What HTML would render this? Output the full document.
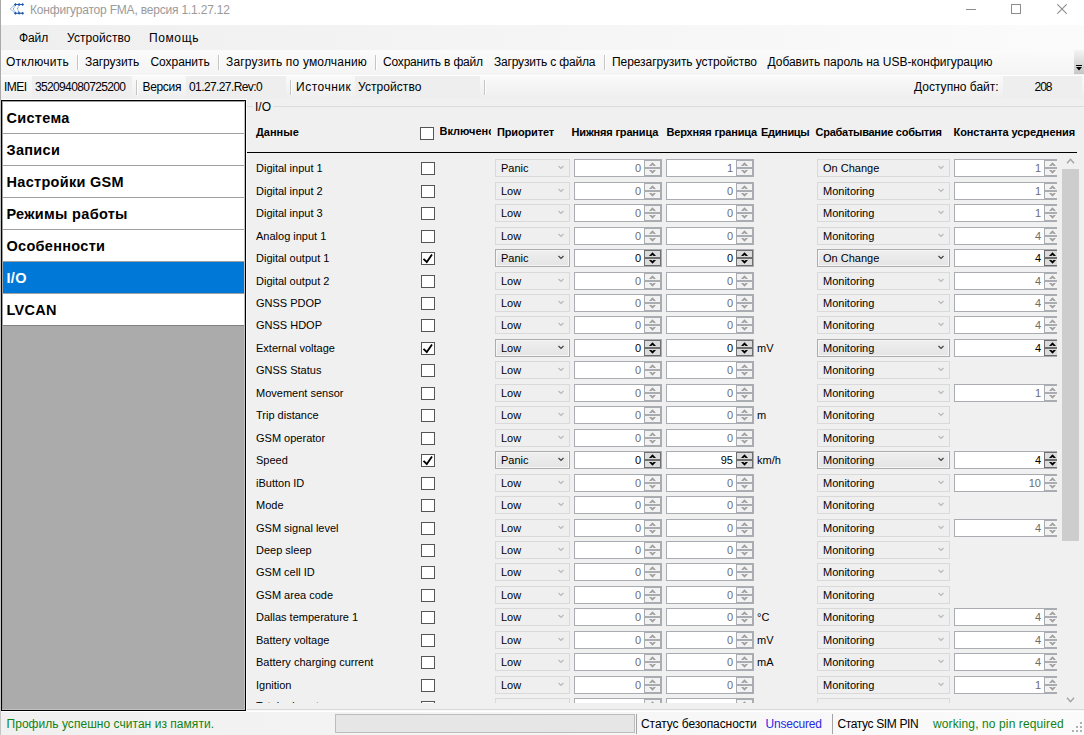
<!DOCTYPE html>
<html><head><meta charset="utf-8"><style>
html,body{margin:0;padding:0;width:1084px;height:735px;overflow:hidden;background:#f0f0f0}
.r{position:absolute}
.t{position:absolute;white-space:nowrap;font-family:'Liberation Sans',sans-serif;}
</style></head><body>
<div class="r" style="left:0px;top:0px;width:1084px;height:735px;background:#f0f0f0"></div><div class="r" style="left:0px;top:0px;width:1084px;height:25px;background:#fff"></div><div class="r" style="left:0px;top:0px;width:1px;height:100px;background:#a9a9a9"></div><div class="r" style="left:0px;top:100px;width:1px;height:635px;background:#c4c4c4"></div><svg class="r" style="left:8px;top:1px" width="20" height="16" viewBox="0 0 20 16">
<g fill="none" stroke="#5d8fcf" stroke-width="1" stroke-dasharray="1.1 0.5"><path d="M7 3.5 L2.3 7.9 L7 12.2"/><path d="M7.6 4.2 L5.2 7.9 L7.6 11.6"/><path d="M11.1 4.2 L9.4 7.9 L11.1 11.6"/></g>
<g fill="#1d5aa6"><path d="M7.4 3 h7.4 v1 h-7.4z M7.4 11.7 h7.4 v1 h-7.4z"/>
<path d="M7.4 2 L8.9 3.5 L7.4 5 L5.9 3.5z M11.1 2 L12.6 3.5 L11.1 5 L9.6 3.5z M14.6 2 L16.1 3.5 L14.6 5 L13.1 3.5z"/>
<path d="M7.4 10.7 L8.9 12.2 L7.4 13.7 L5.9 12.2z M11.1 10.7 L12.6 12.2 L11.1 13.7 L9.6 12.2z M14.6 10.7 L16.1 12.2 L14.6 13.7 L13.1 12.2z"/></g></svg><div class="t" style="left:30px;top:3px;font-size:12px;line-height:15px;color:#9a9a9a;font-weight:normal;letter-spacing:-0.197px;">Конфигуратор FMA, версия 1.1.27.12</div><div class="r" style="left:966px;top:9px;width:10px;height:1px;background:#8c8c8c"></div><div class="r" style="left:1011px;top:4px;width:10px;height:10px;border:1px solid #8c8c8c;box-sizing:border-box"></div><svg class="r" style="left:1057px;top:4px" width="10" height="10" viewBox="0 0 10 10"><path d="M0.3 0.3 L9.7 9.7 M9.7 0.3 L0.3 9.7" stroke="#8c8c8c" stroke-width="1.1"/></svg><div class="r" style="left:1px;top:25px;width:1083px;height:25px;background:linear-gradient(to right,#efefef,#fbfbfb)"></div><div class="t" style="left:19px;top:31px;font-size:12px;line-height:15px;color:#000;font-weight:normal;letter-spacing:-0.105px;">Файл</div><div class="t" style="left:67px;top:31px;font-size:12px;line-height:15px;color:#000;font-weight:normal;letter-spacing:0.080px;">Устройство</div><div class="t" style="left:149px;top:31px;font-size:12px;line-height:15px;color:#000;font-weight:normal;letter-spacing:0.608px;">Помощь</div><div class="r" style="left:1px;top:50px;width:1073px;height:25px;background:linear-gradient(#fbfbfb,#f4f4f4)"></div><div class="t" style="left:6px;top:55px;font-size:12px;line-height:15px;color:#000;font-weight:normal;letter-spacing:0.255px;">Отключить</div><div class="t" style="left:85px;top:55px;font-size:12px;line-height:15px;color:#000;font-weight:normal;letter-spacing:-0.075px;">Загрузить</div><div class="t" style="left:150.5px;top:55px;font-size:12px;line-height:15px;color:#000;font-weight:normal;letter-spacing:-0.055px;">Сохранить</div><div class="t" style="left:226px;top:55px;font-size:12px;line-height:15px;color:#000;font-weight:normal;letter-spacing:0.174px;">Загрузить по умолчанию</div><div class="t" style="left:383px;top:55px;font-size:12px;line-height:15px;color:#000;font-weight:normal;letter-spacing:-0.189px;">Сохранить в файл</div><div class="t" style="left:494px;top:55px;font-size:12px;line-height:15px;color:#000;font-weight:normal;letter-spacing:-0.187px;">Загрузить с файла</div><div class="t" style="left:612px;top:55px;font-size:12px;line-height:15px;color:#000;font-weight:normal;letter-spacing:-0.069px;">Перезагрузить устройство</div><div class="t" style="left:767.5px;top:55px;font-size:12px;line-height:15px;color:#000;font-weight:normal;letter-spacing:-0.028px;">Добавить пароль на USB-конфигурацию</div><div class="r" style="left:77px;top:55px;width:1px;height:15px;background:#c5c5c5"></div><div class="r" style="left:78px;top:55px;width:1px;height:15px;background:#fff"></div><div class="r" style="left:218px;top:55px;width:1px;height:15px;background:#c5c5c5"></div><div class="r" style="left:219px;top:55px;width:1px;height:15px;background:#fff"></div><div class="r" style="left:375px;top:55px;width:1px;height:15px;background:#c5c5c5"></div><div class="r" style="left:376px;top:55px;width:1px;height:15px;background:#fff"></div><div class="r" style="left:604px;top:55px;width:1px;height:15px;background:#c5c5c5"></div><div class="r" style="left:605px;top:55px;width:1px;height:15px;background:#fff"></div><div class="r" style="left:1074px;top:50px;width:10px;height:24px;background:linear-gradient(#f4f4f4,#c6c6c6)"></div><svg class="r" style="left:1075px;top:64px" width="8" height="8" viewBox="0 0 8 8"><path d="M1 1.5h6" stroke="#000"/><path d="M1 3h6L4 6.5z" fill="#000"/></svg><div class="r" style="left:1px;top:75px;width:1083px;height:1px;background:#fff"></div><div class="r" style="left:1px;top:76px;width:1083px;height:23px;background:linear-gradient(#fafafa,#eeeeee)"></div><div class="r" style="left:1px;top:99px;width:246px;height:1px;background:#fff"></div><div class="t" style="left:4px;top:80px;font-size:12px;line-height:15px;color:#000;font-weight:normal;letter-spacing:-0.524px;">IMEI</div><div class="r" style="left:32px;top:76px;width:100px;height:22px;background:#eeeeee"></div><div class="t" style="left:35px;top:80px;font-size:12px;line-height:15px;color:#000;font-weight:normal;letter-spacing:-0.651px;">352094080725200</div><div class="r" style="left:136px;top:80px;width:1px;height:15px;background:#c5c5c5"></div><div class="r" style="left:137px;top:80px;width:1px;height:15px;background:#fff"></div><div class="t" style="left:142.5px;top:80px;font-size:12px;line-height:15px;color:#000;font-weight:normal;letter-spacing:-0.333px;">Версия</div><div class="r" style="left:186px;top:76px;width:100px;height:22px;background:#eeeeee"></div><div class="t" style="left:189px;top:80px;font-size:12px;line-height:15px;color:#000;font-weight:normal;letter-spacing:-0.600px;">01.27.27.Rev:0</div><div class="r" style="left:290px;top:80px;width:1px;height:15px;background:#c5c5c5"></div><div class="r" style="left:291px;top:80px;width:1px;height:15px;background:#fff"></div><div class="t" style="left:296px;top:80px;font-size:12px;line-height:15px;color:#000;font-weight:normal;letter-spacing:0.509px;">Источник</div><div class="r" style="left:355px;top:76px;width:125px;height:22px;background:#eeeeee"></div><div class="t" style="left:358px;top:80px;font-size:12px;line-height:15px;color:#000;font-weight:normal;letter-spacing:0.069px;">Устройство</div><div class="r" style="left:484px;top:80px;width:1px;height:15px;background:#c5c5c5"></div><div class="r" style="left:485px;top:80px;width:1px;height:15px;background:#fff"></div><div class="t" style="left:914px;top:80px;font-size:12px;line-height:15px;color:#000;font-weight:normal;letter-spacing:0.014px;">Доступно байт:</div><div class="r" style="left:1003px;top:76px;width:79px;height:22px;background:#eeeeee"></div><div class="t" style="left:1034.5px;top:80px;font-size:12px;line-height:15px;color:#000;font-weight:normal;letter-spacing:-1.016px;">208</div><div class="r" style="left:1px;top:100px;width:245px;height:611px;background:#ababab;border:1px solid #000;box-sizing:border-box"></div><div class="r" style="left:2px;top:101px;width:243px;height:1px;background:#a0a0a0"></div><div class="r" style="left:2px;top:101px;width:1px;height:609px;background:#a0a0a0"></div><div class="r" style="left:244px;top:101px;width:1px;height:609px;background:#c0c0c0"></div><div class="r" style="left:2px;top:709px;width:243px;height:1px;background:#c0c0c0"></div><div class="r" style="left:246px;top:99px;width:1px;height:613px;background:#f9f9f9"></div><div class="r" style="left:1px;top:711px;width:246px;height:1px;background:#fff"></div><div class="r" style="left:3px;top:102px;width:241px;height:31px;background:#fff"></div><div class="r" style="left:3px;top:133px;width:241px;height:1px;background:#a0a0a0"></div><div class="t" style="left:6.5px;top:109px;font-size:14.5px;line-height:18px;color:#000;font-weight:bold;letter-spacing:0.3px">Система</div><div class="r" style="left:3px;top:134px;width:241px;height:31px;background:#fff"></div><div class="r" style="left:3px;top:165px;width:241px;height:1px;background:#a0a0a0"></div><div class="t" style="left:6.5px;top:141px;font-size:14.5px;line-height:18px;color:#000;font-weight:bold;letter-spacing:0.3px">Записи</div><div class="r" style="left:3px;top:166px;width:241px;height:31px;background:#fff"></div><div class="r" style="left:3px;top:197px;width:241px;height:1px;background:#a0a0a0"></div><div class="t" style="left:6.5px;top:173px;font-size:14.5px;line-height:18px;color:#000;font-weight:bold;letter-spacing:0.3px">Настройки GSM</div><div class="r" style="left:3px;top:198px;width:241px;height:31px;background:#fff"></div><div class="r" style="left:3px;top:229px;width:241px;height:1px;background:#a0a0a0"></div><div class="t" style="left:6.5px;top:205px;font-size:14.5px;line-height:18px;color:#000;font-weight:bold;letter-spacing:0.3px">Режимы работы</div><div class="r" style="left:3px;top:230px;width:241px;height:31px;background:#fff"></div><div class="r" style="left:3px;top:261px;width:241px;height:1px;background:#a0a0a0"></div><div class="t" style="left:6.5px;top:237px;font-size:14.5px;line-height:18px;color:#000;font-weight:bold;letter-spacing:0.3px">Особенности</div><div class="r" style="left:3px;top:262px;width:241px;height:31px;background:#0078d7"></div><div class="r" style="left:3px;top:293px;width:241px;height:1px;background:#a0a0a0"></div><div class="t" style="left:6.5px;top:269px;font-size:14.5px;line-height:18px;color:#fff;font-weight:bold;letter-spacing:0.3px">I/O</div><div class="r" style="left:3px;top:294px;width:241px;height:31px;background:#fff"></div><div class="t" style="left:6.5px;top:301px;font-size:14.5px;line-height:18px;color:#000;font-weight:bold;letter-spacing:0.3px">LVCAN</div><div class="r" style="left:3px;top:325px;width:241px;height:1px;background:#808080"></div><div class="r" style="left:247px;top:106px;width:6px;height:1px;background:#dcdcdc"></div><div class="r" style="left:273px;top:106px;width:811px;height:1px;background:#dcdcdc"></div><div class="t" style="left:255px;top:100px;font-size:12px;line-height:15px;color:#000;font-weight:normal;">I/O</div><div class="t" style="left:256px;top:125px;font-size:11px;line-height:14px;color:#000;font-weight:bold;">Данные</div><div class="t" style="left:497px;top:125px;font-size:11px;line-height:14px;color:#000;font-weight:bold;letter-spacing:-0.143px;">Приоритет</div><div class="t" style="left:571.5px;top:125px;font-size:11px;line-height:14px;color:#000;font-weight:bold;letter-spacing:-0.161px;">Нижняя граница</div><div class="t" style="left:666.5px;top:125px;font-size:11px;line-height:14px;color:#000;font-weight:bold;letter-spacing:-0.174px;">Верхняя граница</div><div class="t" style="left:761px;top:125px;font-size:11px;line-height:14px;color:#000;font-weight:bold;letter-spacing:-0.326px;">Единицы</div><div class="t" style="left:815.5px;top:125px;font-size:11px;line-height:14px;color:#000;font-weight:bold;letter-spacing:-0.263px;">Срабатывание события</div><div class="t" style="left:953.5px;top:125px;font-size:11px;line-height:14px;color:#000;font-weight:bold;letter-spacing:-0.088px;">Константа усреднения</div><div class="t" style="left:439.5px;top:124px;font-size:11px;line-height:14px;color:#000;font-weight:bold;width:51.5px;overflow:hidden;">Включено</div><div class="r" style="left:420px;top:127px;width:14px;height:13px;background:#fff;border:1px solid #555;box-sizing:border-box"></div><div class="r" style="left:247px;top:152px;width:830px;height:1px;background:#000"></div><div class="r" style="left:247px;top:154px;width:837px;height:549px;overflow:hidden"><div class="t" style="left:9px;top:7px;font-size:11px;line-height:14px;color:#000;font-weight:normal;">Digital input 1</div><div class="r" style="left:174px;top:8px;width:14px;height:13px;background:#fff;border:1px solid #555;box-sizing:border-box"></div><div class="r" style="left:248px;top:5px;width:75px;height:18px;background:#efefef;border:1px solid #d9d9d9;box-sizing:border-box"></div><div class="t" style="left:254px;top:7px;font-size:11px;line-height:14px;color:#000;font-weight:normal;">Panic</div><svg class="r" style="left:311px;top:11px" width="6" height="5" viewBox="0 0 6 5"><path d="M0.5 1 L3 3.5 L5.5 1" fill="none" stroke="#b8b8b8" stroke-width="1.2"/></svg><div class="r" style="left:327px;top:5px;width:88px;height:18px;overflow:hidden"><div class="r" style="left:0;top:0;width:88px;height:18px;background:#fff;border:1px solid #a9adb1;box-sizing:border-box"></div><div class="r" style="left:70px;top:1px;width:17px;height:16px;background:#a9adb1"></div><div class="r" style="left:71px;top:2px;width:15px;height:6px;background:#f2f2f2"></div><div class="r" style="left:71px;top:10px;width:15px;height:6px;background:#f2f2f2"></div><svg class="r" style="left:75px;top:3px" width="7" height="12" viewBox="0 0 7 12"><path d="M0 4 L3.5 0.2 L7 4 L4.6 4 L3.5 3 L2.4 4 Z M0 8 L3.5 11.8 L7 8 L4.6 8 L3.5 9 L2.4 8 Z" fill="#a0a0a0"/></svg></div><div class="t" style="left:327px;top:6px;width:67px;text-align:right;font-size:11px;line-height:16px;color:#6d6d6d">0</div><div class="r" style="left:419px;top:5px;width:88px;height:18px;overflow:hidden"><div class="r" style="left:0;top:0;width:88px;height:18px;background:#fff;border:1px solid #a9adb1;box-sizing:border-box"></div><div class="r" style="left:70px;top:1px;width:17px;height:16px;background:#a9adb1"></div><div class="r" style="left:71px;top:2px;width:15px;height:6px;background:#f2f2f2"></div><div class="r" style="left:71px;top:10px;width:15px;height:6px;background:#f2f2f2"></div><svg class="r" style="left:75px;top:3px" width="7" height="12" viewBox="0 0 7 12"><path d="M0 4 L3.5 0.2 L7 4 L4.6 4 L3.5 3 L2.4 4 Z M0 8 L3.5 11.8 L7 8 L4.6 8 L3.5 9 L2.4 8 Z" fill="#a0a0a0"/></svg></div><div class="t" style="left:419px;top:6px;width:67px;text-align:right;font-size:11px;line-height:16px;color:#6d6d6d">1</div><div class="r" style="left:570px;top:5px;width:133px;height:18px;background:#efefef;border:1px solid #d9d9d9;box-sizing:border-box"></div><div class="t" style="left:576px;top:7px;font-size:11px;line-height:14px;color:#000;font-weight:normal;">On Change</div><svg class="r" style="left:691px;top:11px" width="6" height="5" viewBox="0 0 6 5"><path d="M0.5 1 L3 3.5 L5.5 1" fill="none" stroke="#b8b8b8" stroke-width="1.2"/></svg><div class="r" style="left:707px;top:5px;width:103px;height:18px;overflow:hidden"><div class="r" style="left:0;top:0;width:108px;height:18px;background:#fff;border:1px solid #a9adb1;box-sizing:border-box"></div><div class="r" style="left:90px;top:1px;width:17px;height:16px;background:#a9adb1"></div><div class="r" style="left:91px;top:2px;width:15px;height:6px;background:#f2f2f2"></div><div class="r" style="left:91px;top:10px;width:15px;height:6px;background:#f2f2f2"></div><svg class="r" style="left:95px;top:3px" width="7" height="12" viewBox="0 0 7 12"><path d="M0 4 L3.5 0.2 L7 4 L4.6 4 L3.5 3 L2.4 4 Z M0 8 L3.5 11.8 L7 8 L4.6 8 L3.5 9 L2.4 8 Z" fill="#a0a0a0"/></svg></div><div class="t" style="left:707px;top:6px;width:87px;text-align:right;font-size:11px;line-height:16px;color:#6d6d6d">1</div><div class="t" style="left:9px;top:30px;font-size:11px;line-height:14px;color:#000;font-weight:normal;">Digital input 2</div><div class="r" style="left:174px;top:31px;width:14px;height:13px;background:#fff;border:1px solid #555;box-sizing:border-box"></div><div class="r" style="left:248px;top:28px;width:75px;height:18px;background:#efefef;border:1px solid #d9d9d9;box-sizing:border-box"></div><div class="t" style="left:254px;top:30px;font-size:11px;line-height:14px;color:#000;font-weight:normal;">Low</div><svg class="r" style="left:311px;top:34px" width="6" height="5" viewBox="0 0 6 5"><path d="M0.5 1 L3 3.5 L5.5 1" fill="none" stroke="#b8b8b8" stroke-width="1.2"/></svg><div class="r" style="left:327px;top:28px;width:88px;height:18px;overflow:hidden"><div class="r" style="left:0;top:0;width:88px;height:18px;background:#fff;border:1px solid #a9adb1;box-sizing:border-box"></div><div class="r" style="left:70px;top:1px;width:17px;height:16px;background:#a9adb1"></div><div class="r" style="left:71px;top:2px;width:15px;height:6px;background:#f2f2f2"></div><div class="r" style="left:71px;top:10px;width:15px;height:6px;background:#f2f2f2"></div><svg class="r" style="left:75px;top:3px" width="7" height="12" viewBox="0 0 7 12"><path d="M0 4 L3.5 0.2 L7 4 L4.6 4 L3.5 3 L2.4 4 Z M0 8 L3.5 11.8 L7 8 L4.6 8 L3.5 9 L2.4 8 Z" fill="#a0a0a0"/></svg></div><div class="t" style="left:327px;top:29px;width:67px;text-align:right;font-size:11px;line-height:16px;color:#6d6d6d">0</div><div class="r" style="left:419px;top:28px;width:88px;height:18px;overflow:hidden"><div class="r" style="left:0;top:0;width:88px;height:18px;background:#fff;border:1px solid #a9adb1;box-sizing:border-box"></div><div class="r" style="left:70px;top:1px;width:17px;height:16px;background:#a9adb1"></div><div class="r" style="left:71px;top:2px;width:15px;height:6px;background:#f2f2f2"></div><div class="r" style="left:71px;top:10px;width:15px;height:6px;background:#f2f2f2"></div><svg class="r" style="left:75px;top:3px" width="7" height="12" viewBox="0 0 7 12"><path d="M0 4 L3.5 0.2 L7 4 L4.6 4 L3.5 3 L2.4 4 Z M0 8 L3.5 11.8 L7 8 L4.6 8 L3.5 9 L2.4 8 Z" fill="#a0a0a0"/></svg></div><div class="t" style="left:419px;top:29px;width:67px;text-align:right;font-size:11px;line-height:16px;color:#6d6d6d">0</div><div class="r" style="left:570px;top:28px;width:133px;height:18px;background:#efefef;border:1px solid #d9d9d9;box-sizing:border-box"></div><div class="t" style="left:576px;top:30px;font-size:11px;line-height:14px;color:#000;font-weight:normal;">Monitoring</div><svg class="r" style="left:691px;top:34px" width="6" height="5" viewBox="0 0 6 5"><path d="M0.5 1 L3 3.5 L5.5 1" fill="none" stroke="#b8b8b8" stroke-width="1.2"/></svg><div class="r" style="left:707px;top:28px;width:103px;height:18px;overflow:hidden"><div class="r" style="left:0;top:0;width:108px;height:18px;background:#fff;border:1px solid #a9adb1;box-sizing:border-box"></div><div class="r" style="left:90px;top:1px;width:17px;height:16px;background:#a9adb1"></div><div class="r" style="left:91px;top:2px;width:15px;height:6px;background:#f2f2f2"></div><div class="r" style="left:91px;top:10px;width:15px;height:6px;background:#f2f2f2"></div><svg class="r" style="left:95px;top:3px" width="7" height="12" viewBox="0 0 7 12"><path d="M0 4 L3.5 0.2 L7 4 L4.6 4 L3.5 3 L2.4 4 Z M0 8 L3.5 11.8 L7 8 L4.6 8 L3.5 9 L2.4 8 Z" fill="#a0a0a0"/></svg></div><div class="t" style="left:707px;top:29px;width:87px;text-align:right;font-size:11px;line-height:16px;color:#6d6d6d">1</div><div class="t" style="left:9px;top:52px;font-size:11px;line-height:14px;color:#000;font-weight:normal;">Digital input 3</div><div class="r" style="left:174px;top:53px;width:14px;height:13px;background:#fff;border:1px solid #555;box-sizing:border-box"></div><div class="r" style="left:248px;top:50px;width:75px;height:18px;background:#efefef;border:1px solid #d9d9d9;box-sizing:border-box"></div><div class="t" style="left:254px;top:52px;font-size:11px;line-height:14px;color:#000;font-weight:normal;">Low</div><svg class="r" style="left:311px;top:56px" width="6" height="5" viewBox="0 0 6 5"><path d="M0.5 1 L3 3.5 L5.5 1" fill="none" stroke="#b8b8b8" stroke-width="1.2"/></svg><div class="r" style="left:327px;top:50px;width:88px;height:18px;overflow:hidden"><div class="r" style="left:0;top:0;width:88px;height:18px;background:#fff;border:1px solid #a9adb1;box-sizing:border-box"></div><div class="r" style="left:70px;top:1px;width:17px;height:16px;background:#a9adb1"></div><div class="r" style="left:71px;top:2px;width:15px;height:6px;background:#f2f2f2"></div><div class="r" style="left:71px;top:10px;width:15px;height:6px;background:#f2f2f2"></div><svg class="r" style="left:75px;top:3px" width="7" height="12" viewBox="0 0 7 12"><path d="M0 4 L3.5 0.2 L7 4 L4.6 4 L3.5 3 L2.4 4 Z M0 8 L3.5 11.8 L7 8 L4.6 8 L3.5 9 L2.4 8 Z" fill="#a0a0a0"/></svg></div><div class="t" style="left:327px;top:51px;width:67px;text-align:right;font-size:11px;line-height:16px;color:#6d6d6d">0</div><div class="r" style="left:419px;top:50px;width:88px;height:18px;overflow:hidden"><div class="r" style="left:0;top:0;width:88px;height:18px;background:#fff;border:1px solid #a9adb1;box-sizing:border-box"></div><div class="r" style="left:70px;top:1px;width:17px;height:16px;background:#a9adb1"></div><div class="r" style="left:71px;top:2px;width:15px;height:6px;background:#f2f2f2"></div><div class="r" style="left:71px;top:10px;width:15px;height:6px;background:#f2f2f2"></div><svg class="r" style="left:75px;top:3px" width="7" height="12" viewBox="0 0 7 12"><path d="M0 4 L3.5 0.2 L7 4 L4.6 4 L3.5 3 L2.4 4 Z M0 8 L3.5 11.8 L7 8 L4.6 8 L3.5 9 L2.4 8 Z" fill="#a0a0a0"/></svg></div><div class="t" style="left:419px;top:51px;width:67px;text-align:right;font-size:11px;line-height:16px;color:#6d6d6d">0</div><div class="r" style="left:570px;top:50px;width:133px;height:18px;background:#efefef;border:1px solid #d9d9d9;box-sizing:border-box"></div><div class="t" style="left:576px;top:52px;font-size:11px;line-height:14px;color:#000;font-weight:normal;">Monitoring</div><svg class="r" style="left:691px;top:56px" width="6" height="5" viewBox="0 0 6 5"><path d="M0.5 1 L3 3.5 L5.5 1" fill="none" stroke="#b8b8b8" stroke-width="1.2"/></svg><div class="r" style="left:707px;top:50px;width:103px;height:18px;overflow:hidden"><div class="r" style="left:0;top:0;width:108px;height:18px;background:#fff;border:1px solid #a9adb1;box-sizing:border-box"></div><div class="r" style="left:90px;top:1px;width:17px;height:16px;background:#a9adb1"></div><div class="r" style="left:91px;top:2px;width:15px;height:6px;background:#f2f2f2"></div><div class="r" style="left:91px;top:10px;width:15px;height:6px;background:#f2f2f2"></div><svg class="r" style="left:95px;top:3px" width="7" height="12" viewBox="0 0 7 12"><path d="M0 4 L3.5 0.2 L7 4 L4.6 4 L3.5 3 L2.4 4 Z M0 8 L3.5 11.8 L7 8 L4.6 8 L3.5 9 L2.4 8 Z" fill="#a0a0a0"/></svg></div><div class="t" style="left:707px;top:51px;width:87px;text-align:right;font-size:11px;line-height:16px;color:#6d6d6d">1</div><div class="t" style="left:9px;top:75px;font-size:11px;line-height:14px;color:#000;font-weight:normal;">Analog input 1</div><div class="r" style="left:174px;top:76px;width:14px;height:13px;background:#fff;border:1px solid #555;box-sizing:border-box"></div><div class="r" style="left:248px;top:73px;width:75px;height:18px;background:#efefef;border:1px solid #d9d9d9;box-sizing:border-box"></div><div class="t" style="left:254px;top:75px;font-size:11px;line-height:14px;color:#000;font-weight:normal;">Low</div><svg class="r" style="left:311px;top:79px" width="6" height="5" viewBox="0 0 6 5"><path d="M0.5 1 L3 3.5 L5.5 1" fill="none" stroke="#b8b8b8" stroke-width="1.2"/></svg><div class="r" style="left:327px;top:73px;width:88px;height:18px;overflow:hidden"><div class="r" style="left:0;top:0;width:88px;height:18px;background:#fff;border:1px solid #a9adb1;box-sizing:border-box"></div><div class="r" style="left:70px;top:1px;width:17px;height:16px;background:#a9adb1"></div><div class="r" style="left:71px;top:2px;width:15px;height:6px;background:#f2f2f2"></div><div class="r" style="left:71px;top:10px;width:15px;height:6px;background:#f2f2f2"></div><svg class="r" style="left:75px;top:3px" width="7" height="12" viewBox="0 0 7 12"><path d="M0 4 L3.5 0.2 L7 4 L4.6 4 L3.5 3 L2.4 4 Z M0 8 L3.5 11.8 L7 8 L4.6 8 L3.5 9 L2.4 8 Z" fill="#a0a0a0"/></svg></div><div class="t" style="left:327px;top:74px;width:67px;text-align:right;font-size:11px;line-height:16px;color:#6d6d6d">0</div><div class="r" style="left:419px;top:73px;width:88px;height:18px;overflow:hidden"><div class="r" style="left:0;top:0;width:88px;height:18px;background:#fff;border:1px solid #a9adb1;box-sizing:border-box"></div><div class="r" style="left:70px;top:1px;width:17px;height:16px;background:#a9adb1"></div><div class="r" style="left:71px;top:2px;width:15px;height:6px;background:#f2f2f2"></div><div class="r" style="left:71px;top:10px;width:15px;height:6px;background:#f2f2f2"></div><svg class="r" style="left:75px;top:3px" width="7" height="12" viewBox="0 0 7 12"><path d="M0 4 L3.5 0.2 L7 4 L4.6 4 L3.5 3 L2.4 4 Z M0 8 L3.5 11.8 L7 8 L4.6 8 L3.5 9 L2.4 8 Z" fill="#a0a0a0"/></svg></div><div class="t" style="left:419px;top:74px;width:67px;text-align:right;font-size:11px;line-height:16px;color:#6d6d6d">0</div><div class="r" style="left:570px;top:73px;width:133px;height:18px;background:#efefef;border:1px solid #d9d9d9;box-sizing:border-box"></div><div class="t" style="left:576px;top:75px;font-size:11px;line-height:14px;color:#000;font-weight:normal;">Monitoring</div><svg class="r" style="left:691px;top:79px" width="6" height="5" viewBox="0 0 6 5"><path d="M0.5 1 L3 3.5 L5.5 1" fill="none" stroke="#b8b8b8" stroke-width="1.2"/></svg><div class="r" style="left:707px;top:73px;width:103px;height:18px;overflow:hidden"><div class="r" style="left:0;top:0;width:108px;height:18px;background:#fff;border:1px solid #a9adb1;box-sizing:border-box"></div><div class="r" style="left:90px;top:1px;width:17px;height:16px;background:#a9adb1"></div><div class="r" style="left:91px;top:2px;width:15px;height:6px;background:#f2f2f2"></div><div class="r" style="left:91px;top:10px;width:15px;height:6px;background:#f2f2f2"></div><svg class="r" style="left:95px;top:3px" width="7" height="12" viewBox="0 0 7 12"><path d="M0 4 L3.5 0.2 L7 4 L4.6 4 L3.5 3 L2.4 4 Z M0 8 L3.5 11.8 L7 8 L4.6 8 L3.5 9 L2.4 8 Z" fill="#a0a0a0"/></svg></div><div class="t" style="left:707px;top:74px;width:87px;text-align:right;font-size:11px;line-height:16px;color:#6d6d6d">4</div><div class="t" style="left:9px;top:97px;font-size:11px;line-height:14px;color:#000;font-weight:normal;">Digital output 1</div><div class="r" style="left:174px;top:98px;width:14px;height:13px;background:#fff;border:1px solid #555;box-sizing:border-box"></div><svg class="r" style="left:174px;top:98px" width="14" height="13" viewBox="0 0 14 13"><path d="M2.5 6.8 L5.8 10 L11 2.5" fill="none" stroke="#000" stroke-width="1.8"/></svg><div class="r" style="left:248px;top:95px;width:75px;height:18px;background:linear-gradient(#efefef,#e4e4e4);border:1px solid #adadad;box-shadow:inset 0 0 0 1px #f6f6f6;box-sizing:border-box"></div><div class="t" style="left:254px;top:97px;font-size:11px;line-height:14px;color:#000;font-weight:normal;">Panic</div><svg class="r" style="left:311px;top:101px" width="6" height="5" viewBox="0 0 6 5"><path d="M0.5 1 L3 3.5 L5.5 1" fill="none" stroke="#404040" stroke-width="1.2"/></svg><div class="r" style="left:327px;top:95px;width:88px;height:18px;overflow:hidden"><div class="r" style="left:0;top:0;width:88px;height:18px;background:#fff;border:1px solid #a9adb1;box-sizing:border-box"></div><div class="r" style="left:70px;top:1px;width:17px;height:16px;background:#6f6f6f"></div><div class="r" style="left:71px;top:2px;width:15px;height:6px;background:#dcdcdc"></div><div class="r" style="left:71px;top:10px;width:15px;height:6px;background:#dcdcdc"></div><svg class="r" style="left:75px;top:3px" width="7" height="12" viewBox="0 0 7 12"><path d="M0 4 L3.5 0.2 L7 4 L4.6 4 L3.5 3 L2.4 4 Z M0 8 L3.5 11.8 L7 8 L4.6 8 L3.5 9 L2.4 8 Z" fill="#000"/></svg></div><div class="t" style="left:327px;top:96px;width:67px;text-align:right;font-size:11px;line-height:16px;color:#000">0</div><div class="r" style="left:419px;top:95px;width:88px;height:18px;overflow:hidden"><div class="r" style="left:0;top:0;width:88px;height:18px;background:#fff;border:1px solid #a9adb1;box-sizing:border-box"></div><div class="r" style="left:70px;top:1px;width:17px;height:16px;background:#6f6f6f"></div><div class="r" style="left:71px;top:2px;width:15px;height:6px;background:#dcdcdc"></div><div class="r" style="left:71px;top:10px;width:15px;height:6px;background:#dcdcdc"></div><svg class="r" style="left:75px;top:3px" width="7" height="12" viewBox="0 0 7 12"><path d="M0 4 L3.5 0.2 L7 4 L4.6 4 L3.5 3 L2.4 4 Z M0 8 L3.5 11.8 L7 8 L4.6 8 L3.5 9 L2.4 8 Z" fill="#000"/></svg></div><div class="t" style="left:419px;top:96px;width:67px;text-align:right;font-size:11px;line-height:16px;color:#000">0</div><div class="r" style="left:570px;top:95px;width:133px;height:18px;background:linear-gradient(#efefef,#e4e4e4);border:1px solid #adadad;box-shadow:inset 0 0 0 1px #f6f6f6;box-sizing:border-box"></div><div class="t" style="left:576px;top:97px;font-size:11px;line-height:14px;color:#000;font-weight:normal;">On Change</div><svg class="r" style="left:691px;top:101px" width="6" height="5" viewBox="0 0 6 5"><path d="M0.5 1 L3 3.5 L5.5 1" fill="none" stroke="#404040" stroke-width="1.2"/></svg><div class="r" style="left:707px;top:95px;width:103px;height:18px;overflow:hidden"><div class="r" style="left:0;top:0;width:108px;height:18px;background:#fff;border:1px solid #a9adb1;box-sizing:border-box"></div><div class="r" style="left:90px;top:1px;width:17px;height:16px;background:#6f6f6f"></div><div class="r" style="left:91px;top:2px;width:15px;height:6px;background:#dcdcdc"></div><div class="r" style="left:91px;top:10px;width:15px;height:6px;background:#dcdcdc"></div><svg class="r" style="left:95px;top:3px" width="7" height="12" viewBox="0 0 7 12"><path d="M0 4 L3.5 0.2 L7 4 L4.6 4 L3.5 3 L2.4 4 Z M0 8 L3.5 11.8 L7 8 L4.6 8 L3.5 9 L2.4 8 Z" fill="#000"/></svg></div><div class="t" style="left:707px;top:96px;width:87px;text-align:right;font-size:11px;line-height:16px;color:#000">4</div><div class="t" style="left:9px;top:120px;font-size:11px;line-height:14px;color:#000;font-weight:normal;">Digital output 2</div><div class="r" style="left:174px;top:121px;width:14px;height:13px;background:#fff;border:1px solid #555;box-sizing:border-box"></div><div class="r" style="left:248px;top:118px;width:75px;height:18px;background:#efefef;border:1px solid #d9d9d9;box-sizing:border-box"></div><div class="t" style="left:254px;top:120px;font-size:11px;line-height:14px;color:#000;font-weight:normal;">Low</div><svg class="r" style="left:311px;top:124px" width="6" height="5" viewBox="0 0 6 5"><path d="M0.5 1 L3 3.5 L5.5 1" fill="none" stroke="#b8b8b8" stroke-width="1.2"/></svg><div class="r" style="left:327px;top:118px;width:88px;height:18px;overflow:hidden"><div class="r" style="left:0;top:0;width:88px;height:18px;background:#fff;border:1px solid #a9adb1;box-sizing:border-box"></div><div class="r" style="left:70px;top:1px;width:17px;height:16px;background:#a9adb1"></div><div class="r" style="left:71px;top:2px;width:15px;height:6px;background:#f2f2f2"></div><div class="r" style="left:71px;top:10px;width:15px;height:6px;background:#f2f2f2"></div><svg class="r" style="left:75px;top:3px" width="7" height="12" viewBox="0 0 7 12"><path d="M0 4 L3.5 0.2 L7 4 L4.6 4 L3.5 3 L2.4 4 Z M0 8 L3.5 11.8 L7 8 L4.6 8 L3.5 9 L2.4 8 Z" fill="#a0a0a0"/></svg></div><div class="t" style="left:327px;top:119px;width:67px;text-align:right;font-size:11px;line-height:16px;color:#6d6d6d">0</div><div class="r" style="left:419px;top:118px;width:88px;height:18px;overflow:hidden"><div class="r" style="left:0;top:0;width:88px;height:18px;background:#fff;border:1px solid #a9adb1;box-sizing:border-box"></div><div class="r" style="left:70px;top:1px;width:17px;height:16px;background:#a9adb1"></div><div class="r" style="left:71px;top:2px;width:15px;height:6px;background:#f2f2f2"></div><div class="r" style="left:71px;top:10px;width:15px;height:6px;background:#f2f2f2"></div><svg class="r" style="left:75px;top:3px" width="7" height="12" viewBox="0 0 7 12"><path d="M0 4 L3.5 0.2 L7 4 L4.6 4 L3.5 3 L2.4 4 Z M0 8 L3.5 11.8 L7 8 L4.6 8 L3.5 9 L2.4 8 Z" fill="#a0a0a0"/></svg></div><div class="t" style="left:419px;top:119px;width:67px;text-align:right;font-size:11px;line-height:16px;color:#6d6d6d">0</div><div class="r" style="left:570px;top:118px;width:133px;height:18px;background:#efefef;border:1px solid #d9d9d9;box-sizing:border-box"></div><div class="t" style="left:576px;top:120px;font-size:11px;line-height:14px;color:#000;font-weight:normal;">Monitoring</div><svg class="r" style="left:691px;top:124px" width="6" height="5" viewBox="0 0 6 5"><path d="M0.5 1 L3 3.5 L5.5 1" fill="none" stroke="#b8b8b8" stroke-width="1.2"/></svg><div class="r" style="left:707px;top:118px;width:103px;height:18px;overflow:hidden"><div class="r" style="left:0;top:0;width:108px;height:18px;background:#fff;border:1px solid #a9adb1;box-sizing:border-box"></div><div class="r" style="left:90px;top:1px;width:17px;height:16px;background:#a9adb1"></div><div class="r" style="left:91px;top:2px;width:15px;height:6px;background:#f2f2f2"></div><div class="r" style="left:91px;top:10px;width:15px;height:6px;background:#f2f2f2"></div><svg class="r" style="left:95px;top:3px" width="7" height="12" viewBox="0 0 7 12"><path d="M0 4 L3.5 0.2 L7 4 L4.6 4 L3.5 3 L2.4 4 Z M0 8 L3.5 11.8 L7 8 L4.6 8 L3.5 9 L2.4 8 Z" fill="#a0a0a0"/></svg></div><div class="t" style="left:707px;top:119px;width:87px;text-align:right;font-size:11px;line-height:16px;color:#6d6d6d">4</div><div class="t" style="left:9px;top:142px;font-size:11px;line-height:14px;color:#000;font-weight:normal;">GNSS PDOP</div><div class="r" style="left:174px;top:143px;width:14px;height:13px;background:#fff;border:1px solid #555;box-sizing:border-box"></div><div class="r" style="left:248px;top:140px;width:75px;height:18px;background:#efefef;border:1px solid #d9d9d9;box-sizing:border-box"></div><div class="t" style="left:254px;top:142px;font-size:11px;line-height:14px;color:#000;font-weight:normal;">Low</div><svg class="r" style="left:311px;top:146px" width="6" height="5" viewBox="0 0 6 5"><path d="M0.5 1 L3 3.5 L5.5 1" fill="none" stroke="#b8b8b8" stroke-width="1.2"/></svg><div class="r" style="left:327px;top:140px;width:88px;height:18px;overflow:hidden"><div class="r" style="left:0;top:0;width:88px;height:18px;background:#fff;border:1px solid #a9adb1;box-sizing:border-box"></div><div class="r" style="left:70px;top:1px;width:17px;height:16px;background:#a9adb1"></div><div class="r" style="left:71px;top:2px;width:15px;height:6px;background:#f2f2f2"></div><div class="r" style="left:71px;top:10px;width:15px;height:6px;background:#f2f2f2"></div><svg class="r" style="left:75px;top:3px" width="7" height="12" viewBox="0 0 7 12"><path d="M0 4 L3.5 0.2 L7 4 L4.6 4 L3.5 3 L2.4 4 Z M0 8 L3.5 11.8 L7 8 L4.6 8 L3.5 9 L2.4 8 Z" fill="#a0a0a0"/></svg></div><div class="t" style="left:327px;top:141px;width:67px;text-align:right;font-size:11px;line-height:16px;color:#6d6d6d">0</div><div class="r" style="left:419px;top:140px;width:88px;height:18px;overflow:hidden"><div class="r" style="left:0;top:0;width:88px;height:18px;background:#fff;border:1px solid #a9adb1;box-sizing:border-box"></div><div class="r" style="left:70px;top:1px;width:17px;height:16px;background:#a9adb1"></div><div class="r" style="left:71px;top:2px;width:15px;height:6px;background:#f2f2f2"></div><div class="r" style="left:71px;top:10px;width:15px;height:6px;background:#f2f2f2"></div><svg class="r" style="left:75px;top:3px" width="7" height="12" viewBox="0 0 7 12"><path d="M0 4 L3.5 0.2 L7 4 L4.6 4 L3.5 3 L2.4 4 Z M0 8 L3.5 11.8 L7 8 L4.6 8 L3.5 9 L2.4 8 Z" fill="#a0a0a0"/></svg></div><div class="t" style="left:419px;top:141px;width:67px;text-align:right;font-size:11px;line-height:16px;color:#6d6d6d">0</div><div class="r" style="left:570px;top:140px;width:133px;height:18px;background:#efefef;border:1px solid #d9d9d9;box-sizing:border-box"></div><div class="t" style="left:576px;top:142px;font-size:11px;line-height:14px;color:#000;font-weight:normal;">Monitoring</div><svg class="r" style="left:691px;top:146px" width="6" height="5" viewBox="0 0 6 5"><path d="M0.5 1 L3 3.5 L5.5 1" fill="none" stroke="#b8b8b8" stroke-width="1.2"/></svg><div class="r" style="left:707px;top:140px;width:103px;height:18px;overflow:hidden"><div class="r" style="left:0;top:0;width:108px;height:18px;background:#fff;border:1px solid #a9adb1;box-sizing:border-box"></div><div class="r" style="left:90px;top:1px;width:17px;height:16px;background:#a9adb1"></div><div class="r" style="left:91px;top:2px;width:15px;height:6px;background:#f2f2f2"></div><div class="r" style="left:91px;top:10px;width:15px;height:6px;background:#f2f2f2"></div><svg class="r" style="left:95px;top:3px" width="7" height="12" viewBox="0 0 7 12"><path d="M0 4 L3.5 0.2 L7 4 L4.6 4 L3.5 3 L2.4 4 Z M0 8 L3.5 11.8 L7 8 L4.6 8 L3.5 9 L2.4 8 Z" fill="#a0a0a0"/></svg></div><div class="t" style="left:707px;top:141px;width:87px;text-align:right;font-size:11px;line-height:16px;color:#6d6d6d">4</div><div class="t" style="left:9px;top:164px;font-size:11px;line-height:14px;color:#000;font-weight:normal;">GNSS HDOP</div><div class="r" style="left:174px;top:165px;width:14px;height:13px;background:#fff;border:1px solid #555;box-sizing:border-box"></div><div class="r" style="left:248px;top:162px;width:75px;height:18px;background:#efefef;border:1px solid #d9d9d9;box-sizing:border-box"></div><div class="t" style="left:254px;top:164px;font-size:11px;line-height:14px;color:#000;font-weight:normal;">Low</div><svg class="r" style="left:311px;top:168px" width="6" height="5" viewBox="0 0 6 5"><path d="M0.5 1 L3 3.5 L5.5 1" fill="none" stroke="#b8b8b8" stroke-width="1.2"/></svg><div class="r" style="left:327px;top:162px;width:88px;height:18px;overflow:hidden"><div class="r" style="left:0;top:0;width:88px;height:18px;background:#fff;border:1px solid #a9adb1;box-sizing:border-box"></div><div class="r" style="left:70px;top:1px;width:17px;height:16px;background:#a9adb1"></div><div class="r" style="left:71px;top:2px;width:15px;height:6px;background:#f2f2f2"></div><div class="r" style="left:71px;top:10px;width:15px;height:6px;background:#f2f2f2"></div><svg class="r" style="left:75px;top:3px" width="7" height="12" viewBox="0 0 7 12"><path d="M0 4 L3.5 0.2 L7 4 L4.6 4 L3.5 3 L2.4 4 Z M0 8 L3.5 11.8 L7 8 L4.6 8 L3.5 9 L2.4 8 Z" fill="#a0a0a0"/></svg></div><div class="t" style="left:327px;top:163px;width:67px;text-align:right;font-size:11px;line-height:16px;color:#6d6d6d">0</div><div class="r" style="left:419px;top:162px;width:88px;height:18px;overflow:hidden"><div class="r" style="left:0;top:0;width:88px;height:18px;background:#fff;border:1px solid #a9adb1;box-sizing:border-box"></div><div class="r" style="left:70px;top:1px;width:17px;height:16px;background:#a9adb1"></div><div class="r" style="left:71px;top:2px;width:15px;height:6px;background:#f2f2f2"></div><div class="r" style="left:71px;top:10px;width:15px;height:6px;background:#f2f2f2"></div><svg class="r" style="left:75px;top:3px" width="7" height="12" viewBox="0 0 7 12"><path d="M0 4 L3.5 0.2 L7 4 L4.6 4 L3.5 3 L2.4 4 Z M0 8 L3.5 11.8 L7 8 L4.6 8 L3.5 9 L2.4 8 Z" fill="#a0a0a0"/></svg></div><div class="t" style="left:419px;top:163px;width:67px;text-align:right;font-size:11px;line-height:16px;color:#6d6d6d">0</div><div class="r" style="left:570px;top:162px;width:133px;height:18px;background:#efefef;border:1px solid #d9d9d9;box-sizing:border-box"></div><div class="t" style="left:576px;top:164px;font-size:11px;line-height:14px;color:#000;font-weight:normal;">Monitoring</div><svg class="r" style="left:691px;top:168px" width="6" height="5" viewBox="0 0 6 5"><path d="M0.5 1 L3 3.5 L5.5 1" fill="none" stroke="#b8b8b8" stroke-width="1.2"/></svg><div class="r" style="left:707px;top:162px;width:103px;height:18px;overflow:hidden"><div class="r" style="left:0;top:0;width:108px;height:18px;background:#fff;border:1px solid #a9adb1;box-sizing:border-box"></div><div class="r" style="left:90px;top:1px;width:17px;height:16px;background:#a9adb1"></div><div class="r" style="left:91px;top:2px;width:15px;height:6px;background:#f2f2f2"></div><div class="r" style="left:91px;top:10px;width:15px;height:6px;background:#f2f2f2"></div><svg class="r" style="left:95px;top:3px" width="7" height="12" viewBox="0 0 7 12"><path d="M0 4 L3.5 0.2 L7 4 L4.6 4 L3.5 3 L2.4 4 Z M0 8 L3.5 11.8 L7 8 L4.6 8 L3.5 9 L2.4 8 Z" fill="#a0a0a0"/></svg></div><div class="t" style="left:707px;top:163px;width:87px;text-align:right;font-size:11px;line-height:16px;color:#6d6d6d">4</div><div class="t" style="left:9px;top:187px;font-size:11px;line-height:14px;color:#000;font-weight:normal;">External voltage</div><div class="r" style="left:174px;top:188px;width:14px;height:13px;background:#fff;border:1px solid #555;box-sizing:border-box"></div><svg class="r" style="left:174px;top:188px" width="14" height="13" viewBox="0 0 14 13"><path d="M2.5 6.8 L5.8 10 L11 2.5" fill="none" stroke="#000" stroke-width="1.8"/></svg><div class="r" style="left:248px;top:185px;width:75px;height:18px;background:linear-gradient(#efefef,#e4e4e4);border:1px solid #adadad;box-shadow:inset 0 0 0 1px #f6f6f6;box-sizing:border-box"></div><div class="t" style="left:254px;top:187px;font-size:11px;line-height:14px;color:#000;font-weight:normal;">Low</div><svg class="r" style="left:311px;top:191px" width="6" height="5" viewBox="0 0 6 5"><path d="M0.5 1 L3 3.5 L5.5 1" fill="none" stroke="#404040" stroke-width="1.2"/></svg><div class="r" style="left:327px;top:185px;width:88px;height:18px;overflow:hidden"><div class="r" style="left:0;top:0;width:88px;height:18px;background:#fff;border:1px solid #a9adb1;box-sizing:border-box"></div><div class="r" style="left:70px;top:1px;width:17px;height:16px;background:#6f6f6f"></div><div class="r" style="left:71px;top:2px;width:15px;height:6px;background:#dcdcdc"></div><div class="r" style="left:71px;top:10px;width:15px;height:6px;background:#dcdcdc"></div><svg class="r" style="left:75px;top:3px" width="7" height="12" viewBox="0 0 7 12"><path d="M0 4 L3.5 0.2 L7 4 L4.6 4 L3.5 3 L2.4 4 Z M0 8 L3.5 11.8 L7 8 L4.6 8 L3.5 9 L2.4 8 Z" fill="#000"/></svg></div><div class="t" style="left:327px;top:186px;width:67px;text-align:right;font-size:11px;line-height:16px;color:#000">0</div><div class="r" style="left:419px;top:185px;width:88px;height:18px;overflow:hidden"><div class="r" style="left:0;top:0;width:88px;height:18px;background:#fff;border:1px solid #a9adb1;box-sizing:border-box"></div><div class="r" style="left:70px;top:1px;width:17px;height:16px;background:#6f6f6f"></div><div class="r" style="left:71px;top:2px;width:15px;height:6px;background:#dcdcdc"></div><div class="r" style="left:71px;top:10px;width:15px;height:6px;background:#dcdcdc"></div><svg class="r" style="left:75px;top:3px" width="7" height="12" viewBox="0 0 7 12"><path d="M0 4 L3.5 0.2 L7 4 L4.6 4 L3.5 3 L2.4 4 Z M0 8 L3.5 11.8 L7 8 L4.6 8 L3.5 9 L2.4 8 Z" fill="#000"/></svg></div><div class="t" style="left:419px;top:186px;width:67px;text-align:right;font-size:11px;line-height:16px;color:#000">0</div><div class="t" style="left:510px;top:187px;font-size:11px;line-height:14px;color:#000;font-weight:normal;">mV</div><div class="r" style="left:570px;top:185px;width:133px;height:18px;background:linear-gradient(#efefef,#e4e4e4);border:1px solid #adadad;box-shadow:inset 0 0 0 1px #f6f6f6;box-sizing:border-box"></div><div class="t" style="left:576px;top:187px;font-size:11px;line-height:14px;color:#000;font-weight:normal;">Monitoring</div><svg class="r" style="left:691px;top:191px" width="6" height="5" viewBox="0 0 6 5"><path d="M0.5 1 L3 3.5 L5.5 1" fill="none" stroke="#404040" stroke-width="1.2"/></svg><div class="r" style="left:707px;top:185px;width:103px;height:18px;overflow:hidden"><div class="r" style="left:0;top:0;width:108px;height:18px;background:#fff;border:1px solid #a9adb1;box-sizing:border-box"></div><div class="r" style="left:90px;top:1px;width:17px;height:16px;background:#6f6f6f"></div><div class="r" style="left:91px;top:2px;width:15px;height:6px;background:#dcdcdc"></div><div class="r" style="left:91px;top:10px;width:15px;height:6px;background:#dcdcdc"></div><svg class="r" style="left:95px;top:3px" width="7" height="12" viewBox="0 0 7 12"><path d="M0 4 L3.5 0.2 L7 4 L4.6 4 L3.5 3 L2.4 4 Z M0 8 L3.5 11.8 L7 8 L4.6 8 L3.5 9 L2.4 8 Z" fill="#000"/></svg></div><div class="t" style="left:707px;top:186px;width:87px;text-align:right;font-size:11px;line-height:16px;color:#000">4</div><div class="t" style="left:9px;top:209px;font-size:11px;line-height:14px;color:#000;font-weight:normal;">GNSS Status</div><div class="r" style="left:174px;top:210px;width:14px;height:13px;background:#fff;border:1px solid #555;box-sizing:border-box"></div><div class="r" style="left:248px;top:207px;width:75px;height:18px;background:#efefef;border:1px solid #d9d9d9;box-sizing:border-box"></div><div class="t" style="left:254px;top:209px;font-size:11px;line-height:14px;color:#000;font-weight:normal;">Low</div><svg class="r" style="left:311px;top:213px" width="6" height="5" viewBox="0 0 6 5"><path d="M0.5 1 L3 3.5 L5.5 1" fill="none" stroke="#b8b8b8" stroke-width="1.2"/></svg><div class="r" style="left:327px;top:207px;width:88px;height:18px;overflow:hidden"><div class="r" style="left:0;top:0;width:88px;height:18px;background:#fff;border:1px solid #a9adb1;box-sizing:border-box"></div><div class="r" style="left:70px;top:1px;width:17px;height:16px;background:#a9adb1"></div><div class="r" style="left:71px;top:2px;width:15px;height:6px;background:#f2f2f2"></div><div class="r" style="left:71px;top:10px;width:15px;height:6px;background:#f2f2f2"></div><svg class="r" style="left:75px;top:3px" width="7" height="12" viewBox="0 0 7 12"><path d="M0 4 L3.5 0.2 L7 4 L4.6 4 L3.5 3 L2.4 4 Z M0 8 L3.5 11.8 L7 8 L4.6 8 L3.5 9 L2.4 8 Z" fill="#a0a0a0"/></svg></div><div class="t" style="left:327px;top:208px;width:67px;text-align:right;font-size:11px;line-height:16px;color:#6d6d6d">0</div><div class="r" style="left:419px;top:207px;width:88px;height:18px;overflow:hidden"><div class="r" style="left:0;top:0;width:88px;height:18px;background:#fff;border:1px solid #a9adb1;box-sizing:border-box"></div><div class="r" style="left:70px;top:1px;width:17px;height:16px;background:#a9adb1"></div><div class="r" style="left:71px;top:2px;width:15px;height:6px;background:#f2f2f2"></div><div class="r" style="left:71px;top:10px;width:15px;height:6px;background:#f2f2f2"></div><svg class="r" style="left:75px;top:3px" width="7" height="12" viewBox="0 0 7 12"><path d="M0 4 L3.5 0.2 L7 4 L4.6 4 L3.5 3 L2.4 4 Z M0 8 L3.5 11.8 L7 8 L4.6 8 L3.5 9 L2.4 8 Z" fill="#a0a0a0"/></svg></div><div class="t" style="left:419px;top:208px;width:67px;text-align:right;font-size:11px;line-height:16px;color:#6d6d6d">0</div><div class="r" style="left:570px;top:207px;width:133px;height:18px;background:#efefef;border:1px solid #d9d9d9;box-sizing:border-box"></div><div class="t" style="left:576px;top:209px;font-size:11px;line-height:14px;color:#000;font-weight:normal;">Monitoring</div><svg class="r" style="left:691px;top:213px" width="6" height="5" viewBox="0 0 6 5"><path d="M0.5 1 L3 3.5 L5.5 1" fill="none" stroke="#b8b8b8" stroke-width="1.2"/></svg><div class="t" style="left:9px;top:232px;font-size:11px;line-height:14px;color:#000;font-weight:normal;">Movement sensor</div><div class="r" style="left:174px;top:233px;width:14px;height:13px;background:#fff;border:1px solid #555;box-sizing:border-box"></div><div class="r" style="left:248px;top:230px;width:75px;height:18px;background:#efefef;border:1px solid #d9d9d9;box-sizing:border-box"></div><div class="t" style="left:254px;top:232px;font-size:11px;line-height:14px;color:#000;font-weight:normal;">Low</div><svg class="r" style="left:311px;top:236px" width="6" height="5" viewBox="0 0 6 5"><path d="M0.5 1 L3 3.5 L5.5 1" fill="none" stroke="#b8b8b8" stroke-width="1.2"/></svg><div class="r" style="left:327px;top:230px;width:88px;height:18px;overflow:hidden"><div class="r" style="left:0;top:0;width:88px;height:18px;background:#fff;border:1px solid #a9adb1;box-sizing:border-box"></div><div class="r" style="left:70px;top:1px;width:17px;height:16px;background:#a9adb1"></div><div class="r" style="left:71px;top:2px;width:15px;height:6px;background:#f2f2f2"></div><div class="r" style="left:71px;top:10px;width:15px;height:6px;background:#f2f2f2"></div><svg class="r" style="left:75px;top:3px" width="7" height="12" viewBox="0 0 7 12"><path d="M0 4 L3.5 0.2 L7 4 L4.6 4 L3.5 3 L2.4 4 Z M0 8 L3.5 11.8 L7 8 L4.6 8 L3.5 9 L2.4 8 Z" fill="#a0a0a0"/></svg></div><div class="t" style="left:327px;top:231px;width:67px;text-align:right;font-size:11px;line-height:16px;color:#6d6d6d">0</div><div class="r" style="left:419px;top:230px;width:88px;height:18px;overflow:hidden"><div class="r" style="left:0;top:0;width:88px;height:18px;background:#fff;border:1px solid #a9adb1;box-sizing:border-box"></div><div class="r" style="left:70px;top:1px;width:17px;height:16px;background:#a9adb1"></div><div class="r" style="left:71px;top:2px;width:15px;height:6px;background:#f2f2f2"></div><div class="r" style="left:71px;top:10px;width:15px;height:6px;background:#f2f2f2"></div><svg class="r" style="left:75px;top:3px" width="7" height="12" viewBox="0 0 7 12"><path d="M0 4 L3.5 0.2 L7 4 L4.6 4 L3.5 3 L2.4 4 Z M0 8 L3.5 11.8 L7 8 L4.6 8 L3.5 9 L2.4 8 Z" fill="#a0a0a0"/></svg></div><div class="t" style="left:419px;top:231px;width:67px;text-align:right;font-size:11px;line-height:16px;color:#6d6d6d">0</div><div class="r" style="left:570px;top:230px;width:133px;height:18px;background:#efefef;border:1px solid #d9d9d9;box-sizing:border-box"></div><div class="t" style="left:576px;top:232px;font-size:11px;line-height:14px;color:#000;font-weight:normal;">Monitoring</div><svg class="r" style="left:691px;top:236px" width="6" height="5" viewBox="0 0 6 5"><path d="M0.5 1 L3 3.5 L5.5 1" fill="none" stroke="#b8b8b8" stroke-width="1.2"/></svg><div class="r" style="left:707px;top:230px;width:103px;height:18px;overflow:hidden"><div class="r" style="left:0;top:0;width:108px;height:18px;background:#fff;border:1px solid #a9adb1;box-sizing:border-box"></div><div class="r" style="left:90px;top:1px;width:17px;height:16px;background:#a9adb1"></div><div class="r" style="left:91px;top:2px;width:15px;height:6px;background:#f2f2f2"></div><div class="r" style="left:91px;top:10px;width:15px;height:6px;background:#f2f2f2"></div><svg class="r" style="left:95px;top:3px" width="7" height="12" viewBox="0 0 7 12"><path d="M0 4 L3.5 0.2 L7 4 L4.6 4 L3.5 3 L2.4 4 Z M0 8 L3.5 11.8 L7 8 L4.6 8 L3.5 9 L2.4 8 Z" fill="#a0a0a0"/></svg></div><div class="t" style="left:707px;top:231px;width:87px;text-align:right;font-size:11px;line-height:16px;color:#6d6d6d">1</div><div class="t" style="left:9px;top:254px;font-size:11px;line-height:14px;color:#000;font-weight:normal;">Trip distance</div><div class="r" style="left:174px;top:255px;width:14px;height:13px;background:#fff;border:1px solid #555;box-sizing:border-box"></div><div class="r" style="left:248px;top:252px;width:75px;height:18px;background:#efefef;border:1px solid #d9d9d9;box-sizing:border-box"></div><div class="t" style="left:254px;top:254px;font-size:11px;line-height:14px;color:#000;font-weight:normal;">Low</div><svg class="r" style="left:311px;top:258px" width="6" height="5" viewBox="0 0 6 5"><path d="M0.5 1 L3 3.5 L5.5 1" fill="none" stroke="#b8b8b8" stroke-width="1.2"/></svg><div class="r" style="left:327px;top:252px;width:88px;height:18px;overflow:hidden"><div class="r" style="left:0;top:0;width:88px;height:18px;background:#fff;border:1px solid #a9adb1;box-sizing:border-box"></div><div class="r" style="left:70px;top:1px;width:17px;height:16px;background:#a9adb1"></div><div class="r" style="left:71px;top:2px;width:15px;height:6px;background:#f2f2f2"></div><div class="r" style="left:71px;top:10px;width:15px;height:6px;background:#f2f2f2"></div><svg class="r" style="left:75px;top:3px" width="7" height="12" viewBox="0 0 7 12"><path d="M0 4 L3.5 0.2 L7 4 L4.6 4 L3.5 3 L2.4 4 Z M0 8 L3.5 11.8 L7 8 L4.6 8 L3.5 9 L2.4 8 Z" fill="#a0a0a0"/></svg></div><div class="t" style="left:327px;top:253px;width:67px;text-align:right;font-size:11px;line-height:16px;color:#6d6d6d">0</div><div class="r" style="left:419px;top:252px;width:88px;height:18px;overflow:hidden"><div class="r" style="left:0;top:0;width:88px;height:18px;background:#fff;border:1px solid #a9adb1;box-sizing:border-box"></div><div class="r" style="left:70px;top:1px;width:17px;height:16px;background:#a9adb1"></div><div class="r" style="left:71px;top:2px;width:15px;height:6px;background:#f2f2f2"></div><div class="r" style="left:71px;top:10px;width:15px;height:6px;background:#f2f2f2"></div><svg class="r" style="left:75px;top:3px" width="7" height="12" viewBox="0 0 7 12"><path d="M0 4 L3.5 0.2 L7 4 L4.6 4 L3.5 3 L2.4 4 Z M0 8 L3.5 11.8 L7 8 L4.6 8 L3.5 9 L2.4 8 Z" fill="#a0a0a0"/></svg></div><div class="t" style="left:419px;top:253px;width:67px;text-align:right;font-size:11px;line-height:16px;color:#6d6d6d">0</div><div class="t" style="left:510px;top:254px;font-size:11px;line-height:14px;color:#000;font-weight:normal;">m</div><div class="r" style="left:570px;top:252px;width:133px;height:18px;background:#efefef;border:1px solid #d9d9d9;box-sizing:border-box"></div><div class="t" style="left:576px;top:254px;font-size:11px;line-height:14px;color:#000;font-weight:normal;">Monitoring</div><svg class="r" style="left:691px;top:258px" width="6" height="5" viewBox="0 0 6 5"><path d="M0.5 1 L3 3.5 L5.5 1" fill="none" stroke="#b8b8b8" stroke-width="1.2"/></svg><div class="t" style="left:9px;top:277px;font-size:11px;line-height:14px;color:#000;font-weight:normal;">GSM operator</div><div class="r" style="left:174px;top:278px;width:14px;height:13px;background:#fff;border:1px solid #555;box-sizing:border-box"></div><div class="r" style="left:248px;top:275px;width:75px;height:18px;background:#efefef;border:1px solid #d9d9d9;box-sizing:border-box"></div><div class="t" style="left:254px;top:277px;font-size:11px;line-height:14px;color:#000;font-weight:normal;">Low</div><svg class="r" style="left:311px;top:281px" width="6" height="5" viewBox="0 0 6 5"><path d="M0.5 1 L3 3.5 L5.5 1" fill="none" stroke="#b8b8b8" stroke-width="1.2"/></svg><div class="r" style="left:327px;top:275px;width:88px;height:18px;overflow:hidden"><div class="r" style="left:0;top:0;width:88px;height:18px;background:#fff;border:1px solid #a9adb1;box-sizing:border-box"></div><div class="r" style="left:70px;top:1px;width:17px;height:16px;background:#a9adb1"></div><div class="r" style="left:71px;top:2px;width:15px;height:6px;background:#f2f2f2"></div><div class="r" style="left:71px;top:10px;width:15px;height:6px;background:#f2f2f2"></div><svg class="r" style="left:75px;top:3px" width="7" height="12" viewBox="0 0 7 12"><path d="M0 4 L3.5 0.2 L7 4 L4.6 4 L3.5 3 L2.4 4 Z M0 8 L3.5 11.8 L7 8 L4.6 8 L3.5 9 L2.4 8 Z" fill="#a0a0a0"/></svg></div><div class="t" style="left:327px;top:276px;width:67px;text-align:right;font-size:11px;line-height:16px;color:#6d6d6d">0</div><div class="r" style="left:419px;top:275px;width:88px;height:18px;overflow:hidden"><div class="r" style="left:0;top:0;width:88px;height:18px;background:#fff;border:1px solid #a9adb1;box-sizing:border-box"></div><div class="r" style="left:70px;top:1px;width:17px;height:16px;background:#a9adb1"></div><div class="r" style="left:71px;top:2px;width:15px;height:6px;background:#f2f2f2"></div><div class="r" style="left:71px;top:10px;width:15px;height:6px;background:#f2f2f2"></div><svg class="r" style="left:75px;top:3px" width="7" height="12" viewBox="0 0 7 12"><path d="M0 4 L3.5 0.2 L7 4 L4.6 4 L3.5 3 L2.4 4 Z M0 8 L3.5 11.8 L7 8 L4.6 8 L3.5 9 L2.4 8 Z" fill="#a0a0a0"/></svg></div><div class="t" style="left:419px;top:276px;width:67px;text-align:right;font-size:11px;line-height:16px;color:#6d6d6d">0</div><div class="r" style="left:570px;top:275px;width:133px;height:18px;background:#efefef;border:1px solid #d9d9d9;box-sizing:border-box"></div><div class="t" style="left:576px;top:277px;font-size:11px;line-height:14px;color:#000;font-weight:normal;">Monitoring</div><svg class="r" style="left:691px;top:281px" width="6" height="5" viewBox="0 0 6 5"><path d="M0.5 1 L3 3.5 L5.5 1" fill="none" stroke="#b8b8b8" stroke-width="1.2"/></svg><div class="t" style="left:9px;top:299px;font-size:11px;line-height:14px;color:#000;font-weight:normal;">Speed</div><div class="r" style="left:174px;top:300px;width:14px;height:13px;background:#fff;border:1px solid #555;box-sizing:border-box"></div><svg class="r" style="left:174px;top:300px" width="14" height="13" viewBox="0 0 14 13"><path d="M2.5 6.8 L5.8 10 L11 2.5" fill="none" stroke="#000" stroke-width="1.8"/></svg><div class="r" style="left:248px;top:297px;width:75px;height:18px;background:linear-gradient(#efefef,#e4e4e4);border:1px solid #adadad;box-shadow:inset 0 0 0 1px #f6f6f6;box-sizing:border-box"></div><div class="t" style="left:254px;top:299px;font-size:11px;line-height:14px;color:#000;font-weight:normal;">Panic</div><svg class="r" style="left:311px;top:303px" width="6" height="5" viewBox="0 0 6 5"><path d="M0.5 1 L3 3.5 L5.5 1" fill="none" stroke="#404040" stroke-width="1.2"/></svg><div class="r" style="left:327px;top:297px;width:88px;height:18px;overflow:hidden"><div class="r" style="left:0;top:0;width:88px;height:18px;background:#fff;border:1px solid #a9adb1;box-sizing:border-box"></div><div class="r" style="left:70px;top:1px;width:17px;height:16px;background:#6f6f6f"></div><div class="r" style="left:71px;top:2px;width:15px;height:6px;background:#dcdcdc"></div><div class="r" style="left:71px;top:10px;width:15px;height:6px;background:#dcdcdc"></div><svg class="r" style="left:75px;top:3px" width="7" height="12" viewBox="0 0 7 12"><path d="M0 4 L3.5 0.2 L7 4 L4.6 4 L3.5 3 L2.4 4 Z M0 8 L3.5 11.8 L7 8 L4.6 8 L3.5 9 L2.4 8 Z" fill="#000"/></svg></div><div class="t" style="left:327px;top:298px;width:67px;text-align:right;font-size:11px;line-height:16px;color:#000">0</div><div class="r" style="left:419px;top:297px;width:88px;height:18px;overflow:hidden"><div class="r" style="left:0;top:0;width:88px;height:18px;background:#fff;border:1px solid #a9adb1;box-sizing:border-box"></div><div class="r" style="left:70px;top:1px;width:17px;height:16px;background:#6f6f6f"></div><div class="r" style="left:71px;top:2px;width:15px;height:6px;background:#dcdcdc"></div><div class="r" style="left:71px;top:10px;width:15px;height:6px;background:#dcdcdc"></div><svg class="r" style="left:75px;top:3px" width="7" height="12" viewBox="0 0 7 12"><path d="M0 4 L3.5 0.2 L7 4 L4.6 4 L3.5 3 L2.4 4 Z M0 8 L3.5 11.8 L7 8 L4.6 8 L3.5 9 L2.4 8 Z" fill="#000"/></svg></div><div class="t" style="left:419px;top:298px;width:67px;text-align:right;font-size:11px;line-height:16px;color:#000">95</div><div class="t" style="left:510px;top:299px;font-size:11px;line-height:14px;color:#000;font-weight:normal;">km/h</div><div class="r" style="left:570px;top:297px;width:133px;height:18px;background:linear-gradient(#efefef,#e4e4e4);border:1px solid #adadad;box-shadow:inset 0 0 0 1px #f6f6f6;box-sizing:border-box"></div><div class="t" style="left:576px;top:299px;font-size:11px;line-height:14px;color:#000;font-weight:normal;">Monitoring</div><svg class="r" style="left:691px;top:303px" width="6" height="5" viewBox="0 0 6 5"><path d="M0.5 1 L3 3.5 L5.5 1" fill="none" stroke="#404040" stroke-width="1.2"/></svg><div class="r" style="left:707px;top:297px;width:103px;height:18px;overflow:hidden"><div class="r" style="left:0;top:0;width:108px;height:18px;background:#fff;border:1px solid #a9adb1;box-sizing:border-box"></div><div class="r" style="left:90px;top:1px;width:17px;height:16px;background:#6f6f6f"></div><div class="r" style="left:91px;top:2px;width:15px;height:6px;background:#dcdcdc"></div><div class="r" style="left:91px;top:10px;width:15px;height:6px;background:#dcdcdc"></div><svg class="r" style="left:95px;top:3px" width="7" height="12" viewBox="0 0 7 12"><path d="M0 4 L3.5 0.2 L7 4 L4.6 4 L3.5 3 L2.4 4 Z M0 8 L3.5 11.8 L7 8 L4.6 8 L3.5 9 L2.4 8 Z" fill="#000"/></svg></div><div class="t" style="left:707px;top:298px;width:87px;text-align:right;font-size:11px;line-height:16px;color:#000">4</div><div class="t" style="left:9px;top:322px;font-size:11px;line-height:14px;color:#000;font-weight:normal;">iButton ID</div><div class="r" style="left:174px;top:323px;width:14px;height:13px;background:#fff;border:1px solid #555;box-sizing:border-box"></div><div class="r" style="left:248px;top:320px;width:75px;height:18px;background:#efefef;border:1px solid #d9d9d9;box-sizing:border-box"></div><div class="t" style="left:254px;top:322px;font-size:11px;line-height:14px;color:#000;font-weight:normal;">Low</div><svg class="r" style="left:311px;top:326px" width="6" height="5" viewBox="0 0 6 5"><path d="M0.5 1 L3 3.5 L5.5 1" fill="none" stroke="#b8b8b8" stroke-width="1.2"/></svg><div class="r" style="left:327px;top:320px;width:88px;height:18px;overflow:hidden"><div class="r" style="left:0;top:0;width:88px;height:18px;background:#fff;border:1px solid #a9adb1;box-sizing:border-box"></div><div class="r" style="left:70px;top:1px;width:17px;height:16px;background:#a9adb1"></div><div class="r" style="left:71px;top:2px;width:15px;height:6px;background:#f2f2f2"></div><div class="r" style="left:71px;top:10px;width:15px;height:6px;background:#f2f2f2"></div><svg class="r" style="left:75px;top:3px" width="7" height="12" viewBox="0 0 7 12"><path d="M0 4 L3.5 0.2 L7 4 L4.6 4 L3.5 3 L2.4 4 Z M0 8 L3.5 11.8 L7 8 L4.6 8 L3.5 9 L2.4 8 Z" fill="#a0a0a0"/></svg></div><div class="t" style="left:327px;top:321px;width:67px;text-align:right;font-size:11px;line-height:16px;color:#6d6d6d">0</div><div class="r" style="left:419px;top:320px;width:88px;height:18px;overflow:hidden"><div class="r" style="left:0;top:0;width:88px;height:18px;background:#fff;border:1px solid #a9adb1;box-sizing:border-box"></div><div class="r" style="left:70px;top:1px;width:17px;height:16px;background:#a9adb1"></div><div class="r" style="left:71px;top:2px;width:15px;height:6px;background:#f2f2f2"></div><div class="r" style="left:71px;top:10px;width:15px;height:6px;background:#f2f2f2"></div><svg class="r" style="left:75px;top:3px" width="7" height="12" viewBox="0 0 7 12"><path d="M0 4 L3.5 0.2 L7 4 L4.6 4 L3.5 3 L2.4 4 Z M0 8 L3.5 11.8 L7 8 L4.6 8 L3.5 9 L2.4 8 Z" fill="#a0a0a0"/></svg></div><div class="t" style="left:419px;top:321px;width:67px;text-align:right;font-size:11px;line-height:16px;color:#6d6d6d">0</div><div class="r" style="left:570px;top:320px;width:133px;height:18px;background:#efefef;border:1px solid #d9d9d9;box-sizing:border-box"></div><div class="t" style="left:576px;top:322px;font-size:11px;line-height:14px;color:#000;font-weight:normal;">Monitoring</div><svg class="r" style="left:691px;top:326px" width="6" height="5" viewBox="0 0 6 5"><path d="M0.5 1 L3 3.5 L5.5 1" fill="none" stroke="#b8b8b8" stroke-width="1.2"/></svg><div class="r" style="left:707px;top:320px;width:103px;height:18px;overflow:hidden"><div class="r" style="left:0;top:0;width:108px;height:18px;background:#fff;border:1px solid #a9adb1;box-sizing:border-box"></div><div class="r" style="left:90px;top:1px;width:17px;height:16px;background:#a9adb1"></div><div class="r" style="left:91px;top:2px;width:15px;height:6px;background:#f2f2f2"></div><div class="r" style="left:91px;top:10px;width:15px;height:6px;background:#f2f2f2"></div><svg class="r" style="left:95px;top:3px" width="7" height="12" viewBox="0 0 7 12"><path d="M0 4 L3.5 0.2 L7 4 L4.6 4 L3.5 3 L2.4 4 Z M0 8 L3.5 11.8 L7 8 L4.6 8 L3.5 9 L2.4 8 Z" fill="#a0a0a0"/></svg></div><div class="t" style="left:707px;top:321px;width:87px;text-align:right;font-size:11px;line-height:16px;color:#6d6d6d">10</div><div class="t" style="left:9px;top:344px;font-size:11px;line-height:14px;color:#000;font-weight:normal;">Mode</div><div class="r" style="left:174px;top:345px;width:14px;height:13px;background:#fff;border:1px solid #555;box-sizing:border-box"></div><div class="r" style="left:248px;top:342px;width:75px;height:18px;background:#efefef;border:1px solid #d9d9d9;box-sizing:border-box"></div><div class="t" style="left:254px;top:344px;font-size:11px;line-height:14px;color:#000;font-weight:normal;">Low</div><svg class="r" style="left:311px;top:348px" width="6" height="5" viewBox="0 0 6 5"><path d="M0.5 1 L3 3.5 L5.5 1" fill="none" stroke="#b8b8b8" stroke-width="1.2"/></svg><div class="r" style="left:327px;top:342px;width:88px;height:18px;overflow:hidden"><div class="r" style="left:0;top:0;width:88px;height:18px;background:#fff;border:1px solid #a9adb1;box-sizing:border-box"></div><div class="r" style="left:70px;top:1px;width:17px;height:16px;background:#a9adb1"></div><div class="r" style="left:71px;top:2px;width:15px;height:6px;background:#f2f2f2"></div><div class="r" style="left:71px;top:10px;width:15px;height:6px;background:#f2f2f2"></div><svg class="r" style="left:75px;top:3px" width="7" height="12" viewBox="0 0 7 12"><path d="M0 4 L3.5 0.2 L7 4 L4.6 4 L3.5 3 L2.4 4 Z M0 8 L3.5 11.8 L7 8 L4.6 8 L3.5 9 L2.4 8 Z" fill="#a0a0a0"/></svg></div><div class="t" style="left:327px;top:343px;width:67px;text-align:right;font-size:11px;line-height:16px;color:#6d6d6d">0</div><div class="r" style="left:419px;top:342px;width:88px;height:18px;overflow:hidden"><div class="r" style="left:0;top:0;width:88px;height:18px;background:#fff;border:1px solid #a9adb1;box-sizing:border-box"></div><div class="r" style="left:70px;top:1px;width:17px;height:16px;background:#a9adb1"></div><div class="r" style="left:71px;top:2px;width:15px;height:6px;background:#f2f2f2"></div><div class="r" style="left:71px;top:10px;width:15px;height:6px;background:#f2f2f2"></div><svg class="r" style="left:75px;top:3px" width="7" height="12" viewBox="0 0 7 12"><path d="M0 4 L3.5 0.2 L7 4 L4.6 4 L3.5 3 L2.4 4 Z M0 8 L3.5 11.8 L7 8 L4.6 8 L3.5 9 L2.4 8 Z" fill="#a0a0a0"/></svg></div><div class="t" style="left:419px;top:343px;width:67px;text-align:right;font-size:11px;line-height:16px;color:#6d6d6d">0</div><div class="r" style="left:570px;top:342px;width:133px;height:18px;background:#efefef;border:1px solid #d9d9d9;box-sizing:border-box"></div><div class="t" style="left:576px;top:344px;font-size:11px;line-height:14px;color:#000;font-weight:normal;">Monitoring</div><svg class="r" style="left:691px;top:348px" width="6" height="5" viewBox="0 0 6 5"><path d="M0.5 1 L3 3.5 L5.5 1" fill="none" stroke="#b8b8b8" stroke-width="1.2"/></svg><div class="t" style="left:9px;top:367px;font-size:11px;line-height:14px;color:#000;font-weight:normal;">GSM signal level</div><div class="r" style="left:174px;top:368px;width:14px;height:13px;background:#fff;border:1px solid #555;box-sizing:border-box"></div><div class="r" style="left:248px;top:365px;width:75px;height:18px;background:#efefef;border:1px solid #d9d9d9;box-sizing:border-box"></div><div class="t" style="left:254px;top:367px;font-size:11px;line-height:14px;color:#000;font-weight:normal;">Low</div><svg class="r" style="left:311px;top:371px" width="6" height="5" viewBox="0 0 6 5"><path d="M0.5 1 L3 3.5 L5.5 1" fill="none" stroke="#b8b8b8" stroke-width="1.2"/></svg><div class="r" style="left:327px;top:365px;width:88px;height:18px;overflow:hidden"><div class="r" style="left:0;top:0;width:88px;height:18px;background:#fff;border:1px solid #a9adb1;box-sizing:border-box"></div><div class="r" style="left:70px;top:1px;width:17px;height:16px;background:#a9adb1"></div><div class="r" style="left:71px;top:2px;width:15px;height:6px;background:#f2f2f2"></div><div class="r" style="left:71px;top:10px;width:15px;height:6px;background:#f2f2f2"></div><svg class="r" style="left:75px;top:3px" width="7" height="12" viewBox="0 0 7 12"><path d="M0 4 L3.5 0.2 L7 4 L4.6 4 L3.5 3 L2.4 4 Z M0 8 L3.5 11.8 L7 8 L4.6 8 L3.5 9 L2.4 8 Z" fill="#a0a0a0"/></svg></div><div class="t" style="left:327px;top:366px;width:67px;text-align:right;font-size:11px;line-height:16px;color:#6d6d6d">0</div><div class="r" style="left:419px;top:365px;width:88px;height:18px;overflow:hidden"><div class="r" style="left:0;top:0;width:88px;height:18px;background:#fff;border:1px solid #a9adb1;box-sizing:border-box"></div><div class="r" style="left:70px;top:1px;width:17px;height:16px;background:#a9adb1"></div><div class="r" style="left:71px;top:2px;width:15px;height:6px;background:#f2f2f2"></div><div class="r" style="left:71px;top:10px;width:15px;height:6px;background:#f2f2f2"></div><svg class="r" style="left:75px;top:3px" width="7" height="12" viewBox="0 0 7 12"><path d="M0 4 L3.5 0.2 L7 4 L4.6 4 L3.5 3 L2.4 4 Z M0 8 L3.5 11.8 L7 8 L4.6 8 L3.5 9 L2.4 8 Z" fill="#a0a0a0"/></svg></div><div class="t" style="left:419px;top:366px;width:67px;text-align:right;font-size:11px;line-height:16px;color:#6d6d6d">0</div><div class="r" style="left:570px;top:365px;width:133px;height:18px;background:#efefef;border:1px solid #d9d9d9;box-sizing:border-box"></div><div class="t" style="left:576px;top:367px;font-size:11px;line-height:14px;color:#000;font-weight:normal;">Monitoring</div><svg class="r" style="left:691px;top:371px" width="6" height="5" viewBox="0 0 6 5"><path d="M0.5 1 L3 3.5 L5.5 1" fill="none" stroke="#b8b8b8" stroke-width="1.2"/></svg><div class="r" style="left:707px;top:365px;width:103px;height:18px;overflow:hidden"><div class="r" style="left:0;top:0;width:108px;height:18px;background:#fff;border:1px solid #a9adb1;box-sizing:border-box"></div><div class="r" style="left:90px;top:1px;width:17px;height:16px;background:#a9adb1"></div><div class="r" style="left:91px;top:2px;width:15px;height:6px;background:#f2f2f2"></div><div class="r" style="left:91px;top:10px;width:15px;height:6px;background:#f2f2f2"></div><svg class="r" style="left:95px;top:3px" width="7" height="12" viewBox="0 0 7 12"><path d="M0 4 L3.5 0.2 L7 4 L4.6 4 L3.5 3 L2.4 4 Z M0 8 L3.5 11.8 L7 8 L4.6 8 L3.5 9 L2.4 8 Z" fill="#a0a0a0"/></svg></div><div class="t" style="left:707px;top:366px;width:87px;text-align:right;font-size:11px;line-height:16px;color:#6d6d6d">4</div><div class="t" style="left:9px;top:389px;font-size:11px;line-height:14px;color:#000;font-weight:normal;">Deep sleep</div><div class="r" style="left:174px;top:390px;width:14px;height:13px;background:#fff;border:1px solid #555;box-sizing:border-box"></div><div class="r" style="left:248px;top:387px;width:75px;height:18px;background:#efefef;border:1px solid #d9d9d9;box-sizing:border-box"></div><div class="t" style="left:254px;top:389px;font-size:11px;line-height:14px;color:#000;font-weight:normal;">Low</div><svg class="r" style="left:311px;top:393px" width="6" height="5" viewBox="0 0 6 5"><path d="M0.5 1 L3 3.5 L5.5 1" fill="none" stroke="#b8b8b8" stroke-width="1.2"/></svg><div class="r" style="left:327px;top:387px;width:88px;height:18px;overflow:hidden"><div class="r" style="left:0;top:0;width:88px;height:18px;background:#fff;border:1px solid #a9adb1;box-sizing:border-box"></div><div class="r" style="left:70px;top:1px;width:17px;height:16px;background:#a9adb1"></div><div class="r" style="left:71px;top:2px;width:15px;height:6px;background:#f2f2f2"></div><div class="r" style="left:71px;top:10px;width:15px;height:6px;background:#f2f2f2"></div><svg class="r" style="left:75px;top:3px" width="7" height="12" viewBox="0 0 7 12"><path d="M0 4 L3.5 0.2 L7 4 L4.6 4 L3.5 3 L2.4 4 Z M0 8 L3.5 11.8 L7 8 L4.6 8 L3.5 9 L2.4 8 Z" fill="#a0a0a0"/></svg></div><div class="t" style="left:327px;top:388px;width:67px;text-align:right;font-size:11px;line-height:16px;color:#6d6d6d">0</div><div class="r" style="left:419px;top:387px;width:88px;height:18px;overflow:hidden"><div class="r" style="left:0;top:0;width:88px;height:18px;background:#fff;border:1px solid #a9adb1;box-sizing:border-box"></div><div class="r" style="left:70px;top:1px;width:17px;height:16px;background:#a9adb1"></div><div class="r" style="left:71px;top:2px;width:15px;height:6px;background:#f2f2f2"></div><div class="r" style="left:71px;top:10px;width:15px;height:6px;background:#f2f2f2"></div><svg class="r" style="left:75px;top:3px" width="7" height="12" viewBox="0 0 7 12"><path d="M0 4 L3.5 0.2 L7 4 L4.6 4 L3.5 3 L2.4 4 Z M0 8 L3.5 11.8 L7 8 L4.6 8 L3.5 9 L2.4 8 Z" fill="#a0a0a0"/></svg></div><div class="t" style="left:419px;top:388px;width:67px;text-align:right;font-size:11px;line-height:16px;color:#6d6d6d">0</div><div class="r" style="left:570px;top:387px;width:133px;height:18px;background:#efefef;border:1px solid #d9d9d9;box-sizing:border-box"></div><div class="t" style="left:576px;top:389px;font-size:11px;line-height:14px;color:#000;font-weight:normal;">Monitoring</div><svg class="r" style="left:691px;top:393px" width="6" height="5" viewBox="0 0 6 5"><path d="M0.5 1 L3 3.5 L5.5 1" fill="none" stroke="#b8b8b8" stroke-width="1.2"/></svg><div class="t" style="left:9px;top:411px;font-size:11px;line-height:14px;color:#000;font-weight:normal;">GSM cell ID</div><div class="r" style="left:174px;top:412px;width:14px;height:13px;background:#fff;border:1px solid #555;box-sizing:border-box"></div><div class="r" style="left:248px;top:409px;width:75px;height:18px;background:#efefef;border:1px solid #d9d9d9;box-sizing:border-box"></div><div class="t" style="left:254px;top:411px;font-size:11px;line-height:14px;color:#000;font-weight:normal;">Low</div><svg class="r" style="left:311px;top:415px" width="6" height="5" viewBox="0 0 6 5"><path d="M0.5 1 L3 3.5 L5.5 1" fill="none" stroke="#b8b8b8" stroke-width="1.2"/></svg><div class="r" style="left:327px;top:409px;width:88px;height:18px;overflow:hidden"><div class="r" style="left:0;top:0;width:88px;height:18px;background:#fff;border:1px solid #a9adb1;box-sizing:border-box"></div><div class="r" style="left:70px;top:1px;width:17px;height:16px;background:#a9adb1"></div><div class="r" style="left:71px;top:2px;width:15px;height:6px;background:#f2f2f2"></div><div class="r" style="left:71px;top:10px;width:15px;height:6px;background:#f2f2f2"></div><svg class="r" style="left:75px;top:3px" width="7" height="12" viewBox="0 0 7 12"><path d="M0 4 L3.5 0.2 L7 4 L4.6 4 L3.5 3 L2.4 4 Z M0 8 L3.5 11.8 L7 8 L4.6 8 L3.5 9 L2.4 8 Z" fill="#a0a0a0"/></svg></div><div class="t" style="left:327px;top:410px;width:67px;text-align:right;font-size:11px;line-height:16px;color:#6d6d6d">0</div><div class="r" style="left:419px;top:409px;width:88px;height:18px;overflow:hidden"><div class="r" style="left:0;top:0;width:88px;height:18px;background:#fff;border:1px solid #a9adb1;box-sizing:border-box"></div><div class="r" style="left:70px;top:1px;width:17px;height:16px;background:#a9adb1"></div><div class="r" style="left:71px;top:2px;width:15px;height:6px;background:#f2f2f2"></div><div class="r" style="left:71px;top:10px;width:15px;height:6px;background:#f2f2f2"></div><svg class="r" style="left:75px;top:3px" width="7" height="12" viewBox="0 0 7 12"><path d="M0 4 L3.5 0.2 L7 4 L4.6 4 L3.5 3 L2.4 4 Z M0 8 L3.5 11.8 L7 8 L4.6 8 L3.5 9 L2.4 8 Z" fill="#a0a0a0"/></svg></div><div class="t" style="left:419px;top:410px;width:67px;text-align:right;font-size:11px;line-height:16px;color:#6d6d6d">0</div><div class="r" style="left:570px;top:409px;width:133px;height:18px;background:#efefef;border:1px solid #d9d9d9;box-sizing:border-box"></div><div class="t" style="left:576px;top:411px;font-size:11px;line-height:14px;color:#000;font-weight:normal;">Monitoring</div><svg class="r" style="left:691px;top:415px" width="6" height="5" viewBox="0 0 6 5"><path d="M0.5 1 L3 3.5 L5.5 1" fill="none" stroke="#b8b8b8" stroke-width="1.2"/></svg><div class="t" style="left:9px;top:434px;font-size:11px;line-height:14px;color:#000;font-weight:normal;">GSM area code</div><div class="r" style="left:174px;top:435px;width:14px;height:13px;background:#fff;border:1px solid #555;box-sizing:border-box"></div><div class="r" style="left:248px;top:432px;width:75px;height:18px;background:#efefef;border:1px solid #d9d9d9;box-sizing:border-box"></div><div class="t" style="left:254px;top:434px;font-size:11px;line-height:14px;color:#000;font-weight:normal;">Low</div><svg class="r" style="left:311px;top:438px" width="6" height="5" viewBox="0 0 6 5"><path d="M0.5 1 L3 3.5 L5.5 1" fill="none" stroke="#b8b8b8" stroke-width="1.2"/></svg><div class="r" style="left:327px;top:432px;width:88px;height:18px;overflow:hidden"><div class="r" style="left:0;top:0;width:88px;height:18px;background:#fff;border:1px solid #a9adb1;box-sizing:border-box"></div><div class="r" style="left:70px;top:1px;width:17px;height:16px;background:#a9adb1"></div><div class="r" style="left:71px;top:2px;width:15px;height:6px;background:#f2f2f2"></div><div class="r" style="left:71px;top:10px;width:15px;height:6px;background:#f2f2f2"></div><svg class="r" style="left:75px;top:3px" width="7" height="12" viewBox="0 0 7 12"><path d="M0 4 L3.5 0.2 L7 4 L4.6 4 L3.5 3 L2.4 4 Z M0 8 L3.5 11.8 L7 8 L4.6 8 L3.5 9 L2.4 8 Z" fill="#a0a0a0"/></svg></div><div class="t" style="left:327px;top:433px;width:67px;text-align:right;font-size:11px;line-height:16px;color:#6d6d6d">0</div><div class="r" style="left:419px;top:432px;width:88px;height:18px;overflow:hidden"><div class="r" style="left:0;top:0;width:88px;height:18px;background:#fff;border:1px solid #a9adb1;box-sizing:border-box"></div><div class="r" style="left:70px;top:1px;width:17px;height:16px;background:#a9adb1"></div><div class="r" style="left:71px;top:2px;width:15px;height:6px;background:#f2f2f2"></div><div class="r" style="left:71px;top:10px;width:15px;height:6px;background:#f2f2f2"></div><svg class="r" style="left:75px;top:3px" width="7" height="12" viewBox="0 0 7 12"><path d="M0 4 L3.5 0.2 L7 4 L4.6 4 L3.5 3 L2.4 4 Z M0 8 L3.5 11.8 L7 8 L4.6 8 L3.5 9 L2.4 8 Z" fill="#a0a0a0"/></svg></div><div class="t" style="left:419px;top:433px;width:67px;text-align:right;font-size:11px;line-height:16px;color:#6d6d6d">0</div><div class="r" style="left:570px;top:432px;width:133px;height:18px;background:#efefef;border:1px solid #d9d9d9;box-sizing:border-box"></div><div class="t" style="left:576px;top:434px;font-size:11px;line-height:14px;color:#000;font-weight:normal;">Monitoring</div><svg class="r" style="left:691px;top:438px" width="6" height="5" viewBox="0 0 6 5"><path d="M0.5 1 L3 3.5 L5.5 1" fill="none" stroke="#b8b8b8" stroke-width="1.2"/></svg><div class="t" style="left:9px;top:456px;font-size:11px;line-height:14px;color:#000;font-weight:normal;">Dallas temperature 1</div><div class="r" style="left:174px;top:457px;width:14px;height:13px;background:#fff;border:1px solid #555;box-sizing:border-box"></div><div class="r" style="left:248px;top:454px;width:75px;height:18px;background:#efefef;border:1px solid #d9d9d9;box-sizing:border-box"></div><div class="t" style="left:254px;top:456px;font-size:11px;line-height:14px;color:#000;font-weight:normal;">Low</div><svg class="r" style="left:311px;top:460px" width="6" height="5" viewBox="0 0 6 5"><path d="M0.5 1 L3 3.5 L5.5 1" fill="none" stroke="#b8b8b8" stroke-width="1.2"/></svg><div class="r" style="left:327px;top:454px;width:88px;height:18px;overflow:hidden"><div class="r" style="left:0;top:0;width:88px;height:18px;background:#fff;border:1px solid #a9adb1;box-sizing:border-box"></div><div class="r" style="left:70px;top:1px;width:17px;height:16px;background:#a9adb1"></div><div class="r" style="left:71px;top:2px;width:15px;height:6px;background:#f2f2f2"></div><div class="r" style="left:71px;top:10px;width:15px;height:6px;background:#f2f2f2"></div><svg class="r" style="left:75px;top:3px" width="7" height="12" viewBox="0 0 7 12"><path d="M0 4 L3.5 0.2 L7 4 L4.6 4 L3.5 3 L2.4 4 Z M0 8 L3.5 11.8 L7 8 L4.6 8 L3.5 9 L2.4 8 Z" fill="#a0a0a0"/></svg></div><div class="t" style="left:327px;top:455px;width:67px;text-align:right;font-size:11px;line-height:16px;color:#6d6d6d">0</div><div class="r" style="left:419px;top:454px;width:88px;height:18px;overflow:hidden"><div class="r" style="left:0;top:0;width:88px;height:18px;background:#fff;border:1px solid #a9adb1;box-sizing:border-box"></div><div class="r" style="left:70px;top:1px;width:17px;height:16px;background:#a9adb1"></div><div class="r" style="left:71px;top:2px;width:15px;height:6px;background:#f2f2f2"></div><div class="r" style="left:71px;top:10px;width:15px;height:6px;background:#f2f2f2"></div><svg class="r" style="left:75px;top:3px" width="7" height="12" viewBox="0 0 7 12"><path d="M0 4 L3.5 0.2 L7 4 L4.6 4 L3.5 3 L2.4 4 Z M0 8 L3.5 11.8 L7 8 L4.6 8 L3.5 9 L2.4 8 Z" fill="#a0a0a0"/></svg></div><div class="t" style="left:419px;top:455px;width:67px;text-align:right;font-size:11px;line-height:16px;color:#6d6d6d">0</div><div class="t" style="left:510px;top:456px;font-size:11px;line-height:14px;color:#000;font-weight:normal;">°C</div><div class="r" style="left:570px;top:454px;width:133px;height:18px;background:#efefef;border:1px solid #d9d9d9;box-sizing:border-box"></div><div class="t" style="left:576px;top:456px;font-size:11px;line-height:14px;color:#000;font-weight:normal;">Monitoring</div><svg class="r" style="left:691px;top:460px" width="6" height="5" viewBox="0 0 6 5"><path d="M0.5 1 L3 3.5 L5.5 1" fill="none" stroke="#b8b8b8" stroke-width="1.2"/></svg><div class="r" style="left:707px;top:454px;width:103px;height:18px;overflow:hidden"><div class="r" style="left:0;top:0;width:108px;height:18px;background:#fff;border:1px solid #a9adb1;box-sizing:border-box"></div><div class="r" style="left:90px;top:1px;width:17px;height:16px;background:#a9adb1"></div><div class="r" style="left:91px;top:2px;width:15px;height:6px;background:#f2f2f2"></div><div class="r" style="left:91px;top:10px;width:15px;height:6px;background:#f2f2f2"></div><svg class="r" style="left:95px;top:3px" width="7" height="12" viewBox="0 0 7 12"><path d="M0 4 L3.5 0.2 L7 4 L4.6 4 L3.5 3 L2.4 4 Z M0 8 L3.5 11.8 L7 8 L4.6 8 L3.5 9 L2.4 8 Z" fill="#a0a0a0"/></svg></div><div class="t" style="left:707px;top:455px;width:87px;text-align:right;font-size:11px;line-height:16px;color:#6d6d6d">4</div><div class="t" style="left:9px;top:479px;font-size:11px;line-height:14px;color:#000;font-weight:normal;">Battery voltage</div><div class="r" style="left:174px;top:480px;width:14px;height:13px;background:#fff;border:1px solid #555;box-sizing:border-box"></div><div class="r" style="left:248px;top:477px;width:75px;height:18px;background:#efefef;border:1px solid #d9d9d9;box-sizing:border-box"></div><div class="t" style="left:254px;top:479px;font-size:11px;line-height:14px;color:#000;font-weight:normal;">Low</div><svg class="r" style="left:311px;top:483px" width="6" height="5" viewBox="0 0 6 5"><path d="M0.5 1 L3 3.5 L5.5 1" fill="none" stroke="#b8b8b8" stroke-width="1.2"/></svg><div class="r" style="left:327px;top:477px;width:88px;height:18px;overflow:hidden"><div class="r" style="left:0;top:0;width:88px;height:18px;background:#fff;border:1px solid #a9adb1;box-sizing:border-box"></div><div class="r" style="left:70px;top:1px;width:17px;height:16px;background:#a9adb1"></div><div class="r" style="left:71px;top:2px;width:15px;height:6px;background:#f2f2f2"></div><div class="r" style="left:71px;top:10px;width:15px;height:6px;background:#f2f2f2"></div><svg class="r" style="left:75px;top:3px" width="7" height="12" viewBox="0 0 7 12"><path d="M0 4 L3.5 0.2 L7 4 L4.6 4 L3.5 3 L2.4 4 Z M0 8 L3.5 11.8 L7 8 L4.6 8 L3.5 9 L2.4 8 Z" fill="#a0a0a0"/></svg></div><div class="t" style="left:327px;top:478px;width:67px;text-align:right;font-size:11px;line-height:16px;color:#6d6d6d">0</div><div class="r" style="left:419px;top:477px;width:88px;height:18px;overflow:hidden"><div class="r" style="left:0;top:0;width:88px;height:18px;background:#fff;border:1px solid #a9adb1;box-sizing:border-box"></div><div class="r" style="left:70px;top:1px;width:17px;height:16px;background:#a9adb1"></div><div class="r" style="left:71px;top:2px;width:15px;height:6px;background:#f2f2f2"></div><div class="r" style="left:71px;top:10px;width:15px;height:6px;background:#f2f2f2"></div><svg class="r" style="left:75px;top:3px" width="7" height="12" viewBox="0 0 7 12"><path d="M0 4 L3.5 0.2 L7 4 L4.6 4 L3.5 3 L2.4 4 Z M0 8 L3.5 11.8 L7 8 L4.6 8 L3.5 9 L2.4 8 Z" fill="#a0a0a0"/></svg></div><div class="t" style="left:419px;top:478px;width:67px;text-align:right;font-size:11px;line-height:16px;color:#6d6d6d">0</div><div class="t" style="left:510px;top:479px;font-size:11px;line-height:14px;color:#000;font-weight:normal;">mV</div><div class="r" style="left:570px;top:477px;width:133px;height:18px;background:#efefef;border:1px solid #d9d9d9;box-sizing:border-box"></div><div class="t" style="left:576px;top:479px;font-size:11px;line-height:14px;color:#000;font-weight:normal;">Monitoring</div><svg class="r" style="left:691px;top:483px" width="6" height="5" viewBox="0 0 6 5"><path d="M0.5 1 L3 3.5 L5.5 1" fill="none" stroke="#b8b8b8" stroke-width="1.2"/></svg><div class="r" style="left:707px;top:477px;width:103px;height:18px;overflow:hidden"><div class="r" style="left:0;top:0;width:108px;height:18px;background:#fff;border:1px solid #a9adb1;box-sizing:border-box"></div><div class="r" style="left:90px;top:1px;width:17px;height:16px;background:#a9adb1"></div><div class="r" style="left:91px;top:2px;width:15px;height:6px;background:#f2f2f2"></div><div class="r" style="left:91px;top:10px;width:15px;height:6px;background:#f2f2f2"></div><svg class="r" style="left:95px;top:3px" width="7" height="12" viewBox="0 0 7 12"><path d="M0 4 L3.5 0.2 L7 4 L4.6 4 L3.5 3 L2.4 4 Z M0 8 L3.5 11.8 L7 8 L4.6 8 L3.5 9 L2.4 8 Z" fill="#a0a0a0"/></svg></div><div class="t" style="left:707px;top:478px;width:87px;text-align:right;font-size:11px;line-height:16px;color:#6d6d6d">4</div><div class="t" style="left:9px;top:501px;font-size:11px;line-height:14px;color:#000;font-weight:normal;">Battery charging current</div><div class="r" style="left:174px;top:502px;width:14px;height:13px;background:#fff;border:1px solid #555;box-sizing:border-box"></div><div class="r" style="left:248px;top:499px;width:75px;height:18px;background:#efefef;border:1px solid #d9d9d9;box-sizing:border-box"></div><div class="t" style="left:254px;top:501px;font-size:11px;line-height:14px;color:#000;font-weight:normal;">Low</div><svg class="r" style="left:311px;top:505px" width="6" height="5" viewBox="0 0 6 5"><path d="M0.5 1 L3 3.5 L5.5 1" fill="none" stroke="#b8b8b8" stroke-width="1.2"/></svg><div class="r" style="left:327px;top:499px;width:88px;height:18px;overflow:hidden"><div class="r" style="left:0;top:0;width:88px;height:18px;background:#fff;border:1px solid #a9adb1;box-sizing:border-box"></div><div class="r" style="left:70px;top:1px;width:17px;height:16px;background:#a9adb1"></div><div class="r" style="left:71px;top:2px;width:15px;height:6px;background:#f2f2f2"></div><div class="r" style="left:71px;top:10px;width:15px;height:6px;background:#f2f2f2"></div><svg class="r" style="left:75px;top:3px" width="7" height="12" viewBox="0 0 7 12"><path d="M0 4 L3.5 0.2 L7 4 L4.6 4 L3.5 3 L2.4 4 Z M0 8 L3.5 11.8 L7 8 L4.6 8 L3.5 9 L2.4 8 Z" fill="#a0a0a0"/></svg></div><div class="t" style="left:327px;top:500px;width:67px;text-align:right;font-size:11px;line-height:16px;color:#6d6d6d">0</div><div class="r" style="left:419px;top:499px;width:88px;height:18px;overflow:hidden"><div class="r" style="left:0;top:0;width:88px;height:18px;background:#fff;border:1px solid #a9adb1;box-sizing:border-box"></div><div class="r" style="left:70px;top:1px;width:17px;height:16px;background:#a9adb1"></div><div class="r" style="left:71px;top:2px;width:15px;height:6px;background:#f2f2f2"></div><div class="r" style="left:71px;top:10px;width:15px;height:6px;background:#f2f2f2"></div><svg class="r" style="left:75px;top:3px" width="7" height="12" viewBox="0 0 7 12"><path d="M0 4 L3.5 0.2 L7 4 L4.6 4 L3.5 3 L2.4 4 Z M0 8 L3.5 11.8 L7 8 L4.6 8 L3.5 9 L2.4 8 Z" fill="#a0a0a0"/></svg></div><div class="t" style="left:419px;top:500px;width:67px;text-align:right;font-size:11px;line-height:16px;color:#6d6d6d">0</div><div class="t" style="left:510px;top:501px;font-size:11px;line-height:14px;color:#000;font-weight:normal;">mA</div><div class="r" style="left:570px;top:499px;width:133px;height:18px;background:#efefef;border:1px solid #d9d9d9;box-sizing:border-box"></div><div class="t" style="left:576px;top:501px;font-size:11px;line-height:14px;color:#000;font-weight:normal;">Monitoring</div><svg class="r" style="left:691px;top:505px" width="6" height="5" viewBox="0 0 6 5"><path d="M0.5 1 L3 3.5 L5.5 1" fill="none" stroke="#b8b8b8" stroke-width="1.2"/></svg><div class="r" style="left:707px;top:499px;width:103px;height:18px;overflow:hidden"><div class="r" style="left:0;top:0;width:108px;height:18px;background:#fff;border:1px solid #a9adb1;box-sizing:border-box"></div><div class="r" style="left:90px;top:1px;width:17px;height:16px;background:#a9adb1"></div><div class="r" style="left:91px;top:2px;width:15px;height:6px;background:#f2f2f2"></div><div class="r" style="left:91px;top:10px;width:15px;height:6px;background:#f2f2f2"></div><svg class="r" style="left:95px;top:3px" width="7" height="12" viewBox="0 0 7 12"><path d="M0 4 L3.5 0.2 L7 4 L4.6 4 L3.5 3 L2.4 4 Z M0 8 L3.5 11.8 L7 8 L4.6 8 L3.5 9 L2.4 8 Z" fill="#a0a0a0"/></svg></div><div class="t" style="left:707px;top:500px;width:87px;text-align:right;font-size:11px;line-height:16px;color:#6d6d6d">4</div><div class="t" style="left:9px;top:524px;font-size:11px;line-height:14px;color:#000;font-weight:normal;">Ignition</div><div class="r" style="left:174px;top:525px;width:14px;height:13px;background:#fff;border:1px solid #555;box-sizing:border-box"></div><div class="r" style="left:248px;top:522px;width:75px;height:18px;background:#efefef;border:1px solid #d9d9d9;box-sizing:border-box"></div><div class="t" style="left:254px;top:524px;font-size:11px;line-height:14px;color:#000;font-weight:normal;">Low</div><svg class="r" style="left:311px;top:528px" width="6" height="5" viewBox="0 0 6 5"><path d="M0.5 1 L3 3.5 L5.5 1" fill="none" stroke="#b8b8b8" stroke-width="1.2"/></svg><div class="r" style="left:327px;top:522px;width:88px;height:18px;overflow:hidden"><div class="r" style="left:0;top:0;width:88px;height:18px;background:#fff;border:1px solid #a9adb1;box-sizing:border-box"></div><div class="r" style="left:70px;top:1px;width:17px;height:16px;background:#a9adb1"></div><div class="r" style="left:71px;top:2px;width:15px;height:6px;background:#f2f2f2"></div><div class="r" style="left:71px;top:10px;width:15px;height:6px;background:#f2f2f2"></div><svg class="r" style="left:75px;top:3px" width="7" height="12" viewBox="0 0 7 12"><path d="M0 4 L3.5 0.2 L7 4 L4.6 4 L3.5 3 L2.4 4 Z M0 8 L3.5 11.8 L7 8 L4.6 8 L3.5 9 L2.4 8 Z" fill="#a0a0a0"/></svg></div><div class="t" style="left:327px;top:523px;width:67px;text-align:right;font-size:11px;line-height:16px;color:#6d6d6d">0</div><div class="r" style="left:419px;top:522px;width:88px;height:18px;overflow:hidden"><div class="r" style="left:0;top:0;width:88px;height:18px;background:#fff;border:1px solid #a9adb1;box-sizing:border-box"></div><div class="r" style="left:70px;top:1px;width:17px;height:16px;background:#a9adb1"></div><div class="r" style="left:71px;top:2px;width:15px;height:6px;background:#f2f2f2"></div><div class="r" style="left:71px;top:10px;width:15px;height:6px;background:#f2f2f2"></div><svg class="r" style="left:75px;top:3px" width="7" height="12" viewBox="0 0 7 12"><path d="M0 4 L3.5 0.2 L7 4 L4.6 4 L3.5 3 L2.4 4 Z M0 8 L3.5 11.8 L7 8 L4.6 8 L3.5 9 L2.4 8 Z" fill="#a0a0a0"/></svg></div><div class="t" style="left:419px;top:523px;width:67px;text-align:right;font-size:11px;line-height:16px;color:#6d6d6d">0</div><div class="r" style="left:570px;top:522px;width:133px;height:18px;background:#efefef;border:1px solid #d9d9d9;box-sizing:border-box"></div><div class="t" style="left:576px;top:524px;font-size:11px;line-height:14px;color:#000;font-weight:normal;">Monitoring</div><svg class="r" style="left:691px;top:528px" width="6" height="5" viewBox="0 0 6 5"><path d="M0.5 1 L3 3.5 L5.5 1" fill="none" stroke="#b8b8b8" stroke-width="1.2"/></svg><div class="r" style="left:707px;top:522px;width:103px;height:18px;overflow:hidden"><div class="r" style="left:0;top:0;width:108px;height:18px;background:#fff;border:1px solid #a9adb1;box-sizing:border-box"></div><div class="r" style="left:90px;top:1px;width:17px;height:16px;background:#a9adb1"></div><div class="r" style="left:91px;top:2px;width:15px;height:6px;background:#f2f2f2"></div><div class="r" style="left:91px;top:10px;width:15px;height:6px;background:#f2f2f2"></div><svg class="r" style="left:95px;top:3px" width="7" height="12" viewBox="0 0 7 12"><path d="M0 4 L3.5 0.2 L7 4 L4.6 4 L3.5 3 L2.4 4 Z M0 8 L3.5 11.8 L7 8 L4.6 8 L3.5 9 L2.4 8 Z" fill="#a0a0a0"/></svg></div><div class="t" style="left:707px;top:523px;width:87px;text-align:right;font-size:11px;line-height:16px;color:#6d6d6d">1</div><div class="t" style="left:9px;top:545px;font-size:11px;line-height:14px;color:#000;font-weight:normal;">Total odometer</div><div class="r" style="left:174px;top:547px;width:14px;height:13px;background:#fff;border:1px solid #555;box-sizing:border-box"></div><div class="r" style="left:248px;top:544px;width:75px;height:18px;background:#efefef;border:1px solid #d9d9d9;box-sizing:border-box"></div><div class="t" style="left:254px;top:546px;font-size:11px;line-height:14px;color:#000;font-weight:normal;">Low</div><svg class="r" style="left:311px;top:550px" width="6" height="5" viewBox="0 0 6 5"><path d="M0.5 1 L3 3.5 L5.5 1" fill="none" stroke="#b8b8b8" stroke-width="1.2"/></svg><div class="r" style="left:327px;top:544px;width:88px;height:18px;overflow:hidden"><div class="r" style="left:0;top:0;width:88px;height:18px;background:#fff;border:1px solid #a9adb1;box-sizing:border-box"></div><div class="r" style="left:70px;top:1px;width:17px;height:16px;background:#a9adb1"></div><div class="r" style="left:71px;top:2px;width:15px;height:6px;background:#f2f2f2"></div><div class="r" style="left:71px;top:10px;width:15px;height:6px;background:#f2f2f2"></div><svg class="r" style="left:75px;top:3px" width="7" height="12" viewBox="0 0 7 12"><path d="M0 4 L3.5 0.2 L7 4 L4.6 4 L3.5 3 L2.4 4 Z M0 8 L3.5 11.8 L7 8 L4.6 8 L3.5 9 L2.4 8 Z" fill="#a0a0a0"/></svg></div><div class="t" style="left:327px;top:545px;width:67px;text-align:right;font-size:11px;line-height:16px;color:#6d6d6d">0</div><div class="r" style="left:419px;top:544px;width:88px;height:18px;overflow:hidden"><div class="r" style="left:0;top:0;width:88px;height:18px;background:#fff;border:1px solid #a9adb1;box-sizing:border-box"></div><div class="r" style="left:70px;top:1px;width:17px;height:16px;background:#a9adb1"></div><div class="r" style="left:71px;top:2px;width:15px;height:6px;background:#f2f2f2"></div><div class="r" style="left:71px;top:10px;width:15px;height:6px;background:#f2f2f2"></div><svg class="r" style="left:75px;top:3px" width="7" height="12" viewBox="0 0 7 12"><path d="M0 4 L3.5 0.2 L7 4 L4.6 4 L3.5 3 L2.4 4 Z M0 8 L3.5 11.8 L7 8 L4.6 8 L3.5 9 L2.4 8 Z" fill="#a0a0a0"/></svg></div><div class="t" style="left:419px;top:545px;width:67px;text-align:right;font-size:11px;line-height:16px;color:#6d6d6d">0</div><div class="r" style="left:570px;top:544px;width:133px;height:18px;background:#efefef;border:1px solid #d9d9d9;box-sizing:border-box"></div><div class="t" style="left:576px;top:546px;font-size:11px;line-height:14px;color:#000;font-weight:normal;">Monitoring</div><svg class="r" style="left:691px;top:550px" width="6" height="5" viewBox="0 0 6 5"><path d="M0.5 1 L3 3.5 L5.5 1" fill="none" stroke="#b8b8b8" stroke-width="1.2"/></svg></div><svg class="r" style="left:1066px;top:158px" width="9" height="6" viewBox="0 0 9 6"><path d="M1 5.2 L4.5 1.3 L8 5.2" fill="none" stroke="#a3a3a3" stroke-width="1.4"/></svg><div class="r" style="left:1062px;top:169px;width:17px;height:372px;background:#cdcdcd"></div><svg class="r" style="left:1066px;top:697px" width="9" height="6" viewBox="0 0 9 6"><path d="M1 0.8 L4.5 4.7 L8 0.8" fill="none" stroke="#a3a3a3" stroke-width="1.4"/></svg><div class="r" style="left:247px;top:709px;width:837px;height:1px;background:#dadada"></div><div class="r" style="left:247px;top:710px;width:837px;height:1px;background:#f7f7f7"></div><div class="r" style="left:247px;top:711px;width:837px;height:1px;background:#fff"></div><div class="r" style="left:1px;top:712px;width:1083px;height:23px;background:linear-gradient(to right,#f0f0f0,#fbfbfb)"></div><div class="t" style="left:6.5px;top:717px;font-size:12px;line-height:15px;color:#128212;font-weight:normal;letter-spacing:0.039px;">Профиль успешно считан из памяти.</div><div class="r" style="left:335px;top:714px;width:300px;height:19px;background:#e6e6e6;border:1px solid #bcbcbc;box-sizing:border-box"></div><div class="r" style="left:636px;top:714px;width:1px;height:20px;background:#a4a4a4"></div><div class="t" style="left:641px;top:717px;font-size:12px;line-height:15px;color:#000;font-weight:normal;letter-spacing:-0.074px;">Статус безопасности</div><div class="t" style="left:765.5px;top:717px;font-size:12px;line-height:15px;color:#2828e6;font-weight:normal;letter-spacing:-0.204px;">Unsecured</div><div class="r" style="left:832px;top:714px;width:1px;height:20px;background:#a4a4a4"></div><div class="t" style="left:837.5px;top:717px;font-size:12px;line-height:15px;color:#000;font-weight:normal;letter-spacing:-0.366px;">Статус SIM PIN</div><div class="t" style="left:933px;top:717px;font-size:12px;line-height:15px;color:#128212;font-weight:normal;letter-spacing:0.114px;">working, no pin required</div><div class="r" style="left:1080px;top:722px;width:2px;height:2px;background:#b0b0b0"></div><div class="r" style="left:1076px;top:726px;width:2px;height:2px;background:#b0b0b0"></div><div class="r" style="left:1080px;top:726px;width:2px;height:2px;background:#b0b0b0"></div><div class="r" style="left:1072px;top:730px;width:2px;height:2px;background:#b0b0b0"></div><div class="r" style="left:1076px;top:730px;width:2px;height:2px;background:#b0b0b0"></div><div class="r" style="left:1080px;top:730px;width:2px;height:2px;background:#b0b0b0"></div>
</body></html>
